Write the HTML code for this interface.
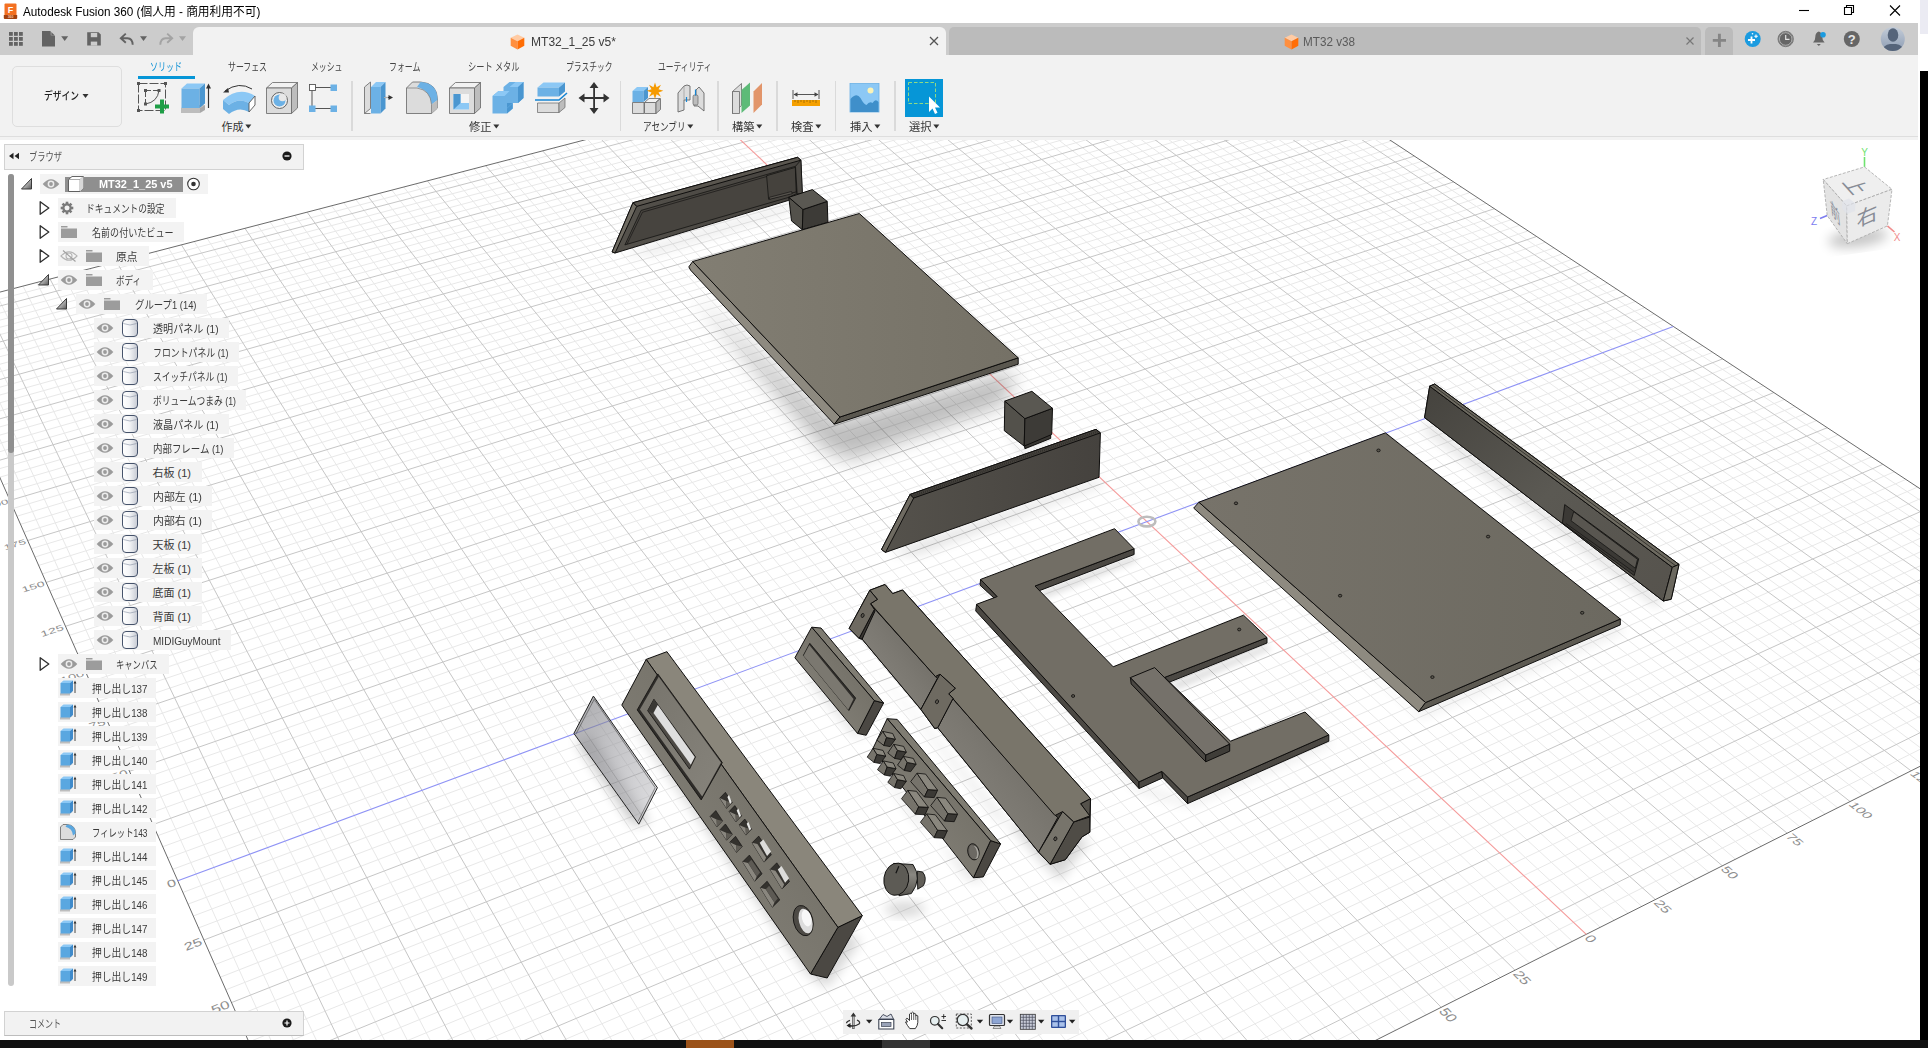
<!DOCTYPE html><html lang="ja"><head><meta charset="utf-8"><title>Autodesk Fusion 360</title><style>
html,body{margin:0;padding:0;background:#fff;overflow:hidden}
body{width:1928px;height:1048px;position:relative;font-family:"Liberation Sans","Noto Sans CJK JP",sans-serif}
.abs{position:absolute}
.t{position:absolute;white-space:pre;line-height:16px;height:16px;transform-origin:0 50%}
.b{position:absolute}
#win{position:absolute;left:0;top:0;width:1920px;height:1040px;overflow:hidden;background:#fff}
#titlebar{position:absolute;left:0;top:0;width:1920px;height:23px;background:#fff}
#tabstrip{position:absolute;left:0;top:0;width:1920px;height:55px}
#tabstrip:before{content:"";position:absolute;left:0;top:23px;width:1918px;height:32px;background:#cccccc}
#tab1{position:absolute;left:193px;top:27px;width:752.500px;height:28px;background:#f2f2f2;border-radius:6px 6px 0 0}
#tab2{position:absolute;left:949px;top:27px;width:751.500px;height:27.500px;background:#bbbbbb;border-radius:5px 5px 0 0}
#tabplus{position:absolute;left:1705px;top:27px;width:28px;height:27.500px;background:#bbbbbb;border-radius:5px 5px 0 0}
#toolbar{position:absolute;left:0;top:0;width:1920px;height:137px}
#toolbar:before{content:"";position:absolute;left:0;top:55px;width:1918px;height:85px;background:#f2f2f2}
#toolbar:after{content:"";position:absolute;left:0;top:136px;width:1918px;height:1px;background:#dedede}
#wsbtn{position:absolute;left:12px;top:65.500px;width:107.500px;height:59px;border:1.500px solid #dedede;border-radius:5px;background:#f2f2f2}
#brhead{position:absolute;left:4px;top:144px;width:298px;height:23.500px;background:#f2f2f2;border:1px solid #d2d2d2}
#comments{position:absolute;left:4px;top:1011px;width:298px;height:23px;background:#f2f2f2;border:1px solid #d2d2d2;border-bottom:1.500px solid #bdbdbd}
#sbtrack{position:absolute;left:8px;top:174px;width:5.500px;height:812px;background:#c9c9c9;border-radius:3px}
#sbthumb{position:absolute;left:8px;top:174px;width:5.500px;height:279px;background:#909090;border-radius:3px}
#bottom{position:absolute;left:0;top:1040px;width:1928px;height:8px;background:#101010}
#rstrip{position:absolute;left:1920px;top:0;width:8px;height:1048px;background:#000}
</style></head><body><div id="win"><svg id="scene" class="abs" style="left:0;top:140px" width="1920" height="900" viewBox="0 140 1920 900"><defs><filter id="sh6" x="-30%" y="-30%" width="160%" height="160%"><feGaussianBlur stdDeviation="6"/></filter><filter id="sh3" x="-30%" y="-30%" width="160%" height="160%"><feGaussianBlur stdDeviation="3"/></filter><filter id="sh10" x="-30%" y="-30%" width="160%" height="160%"><feGaussianBlur stdDeviation="10"/></filter><linearGradient id="gTop" x1="0" y1="0" x2="1" y2="0"><stop offset="0" stop-color="#827e73"/><stop offset="1" stop-color="#757166"/></linearGradient><linearGradient id="gBot" x1="0" y1="0" x2="1" y2="0"><stop offset="0" stop-color="#77736a"/><stop offset="1" stop-color="#6c6960"/></linearGradient><linearGradient id="gPanel" x1="0" y1="0" x2="1" y2="0"><stop offset="0" stop-color="#55524c"/><stop offset="1" stop-color="#45423e"/></linearGradient><linearGradient id="gG" x1="0" y1="0" x2="1" y2="1"><stop offset="0" stop-color="#45433e"/><stop offset="0.5" stop-color="#5b5953"/><stop offset="1" stop-color="#56534d"/></linearGradient><linearGradient id="gChan" x1="0" y1="1" x2="1" y2="0"><stop offset="0" stop-color="#8c8982"/><stop offset="0.5" stop-color="#7b7871"/><stop offset="1" stop-color="#66635c"/></linearGradient><linearGradient id="gFront" x1="0" y1="1" x2="1" y2="0"><stop offset="0" stop-color="#8a877f"/><stop offset="0.6" stop-color="#77746b"/><stop offset="1" stop-color="#6e6b62"/></linearGradient><linearGradient id="gGlass" x1="0" y1="0" x2="1" y2="1"><stop offset="0" stop-color="#77777c" stop-opacity="0.62"/><stop offset="0.6" stop-color="#9a9aa0" stop-opacity="0.5"/><stop offset="1" stop-color="#b8b8bc" stop-opacity="0.45"/></linearGradient><linearGradient id="gKnob" x1="0" y1="0" x2="0" y2="1"><stop offset="0" stop-color="#6a6862"/><stop offset="0.35" stop-color="#8a8882"/><stop offset="1" stop-color="#55534e"/></linearGradient><linearGradient id="gBez" x1="0" y1="0" x2="1" y2="1"><stop offset="0" stop-color="#77746c"/><stop offset="1" stop-color="#86837b"/></linearGradient></defs><path d="M-70.7 317.5L1167.7 -6.2M-65.1 330.2L1179.9 1.9M-62.3 336.6L1186.1 5.9M-59.4 343.1L1192.3 10.0M-56.5 349.7L1198.6 14.1M-50.7 362.9L1211.2 22.5M-47.7 369.6L1217.6 26.7M-44.7 376.4L1224.0 30.9M-41.7 383.2L1230.4 35.1M-35.6 397.0L1243.5 43.7M-32.5 404.0L1250.1 48.0M-29.4 411.0L1256.7 52.4M-26.3 418.2L1263.4 56.8M-19.9 432.5L1276.8 65.6M-16.7 439.8L1283.7 70.1M-13.5 447.2L1290.5 74.6M-10.2 454.6L1297.4 79.2M-3.6 469.6L1311.3 88.3M-0.2 477.2L1318.4 93.0M3.1 484.9L1325.5 97.6M6.6 492.6L1332.6 102.3M13.5 508.3L1347.0 111.8M17.0 516.2L1354.3 116.6M20.5 524.3L1361.6 121.4M24.1 532.3L1369.0 126.3M31.3 548.7L1383.9 136.1M35.0 557.0L1391.4 141.0M38.7 565.4L1399.0 146.0M42.4 573.9L1406.7 151.0M50.0 591.0L1422.1 161.2M53.8 599.7L1429.9 166.3M57.7 608.5L1437.8 171.5M61.6 617.4L1445.7 176.7M69.5 635.3L1461.7 187.2M73.5 644.4L1469.8 192.6M77.6 653.6L1477.9 197.9M81.7 662.9L1486.1 203.3M90.0 681.8L1502.7 214.2M94.2 691.3L1511.1 219.7M98.5 701.0L1519.5 225.3M102.8 710.7L1528.1 230.9M111.5 730.5L1545.3 242.2M115.9 740.6L1554.0 247.9M120.4 750.7L1562.7 253.7M124.9 760.9L1571.6 259.5M134.1 781.7L1589.4 271.3M138.8 792.3L1598.5 277.2M143.5 803.0L1607.6 283.2M148.2 813.7L1616.8 289.2M157.9 835.6L1635.3 301.5M162.8 846.7L1644.7 307.6M167.7 858.0L1654.2 313.9M172.7 869.3L1663.7 320.1M182.9 892.4L1683.0 332.8M188.1 904.1L1692.8 339.3M193.3 916.0L1702.7 345.7M198.6 927.9L1712.6 352.3M209.3 952.3L1732.7 365.5M214.8 964.7L1742.8 372.2M220.3 977.2L1753.1 378.9M225.9 989.8L1763.4 385.7M237.3 1015.6L1784.3 399.5M243.0 1028.7L1794.9 406.4M248.9 1041.9L1805.6 413.5M254.8 1055.3L1816.4 420.6M266.8 1082.5L1838.2 434.9M272.9 1096.4L1849.2 442.2M279.1 1110.4L1860.4 449.5M285.4 1124.6L1871.6 456.9M298.1 1153.5L1894.3 471.8M304.6 1168.2L1905.9 479.4M311.2 1183.1L1917.5 487.1M317.8 1198.2L1929.2 494.8M331.3 1228.9L1953.0 510.4M338.2 1244.5L1965.0 518.3M345.2 1260.3L1977.1 526.3M352.3 1276.3L1989.4 534.4M366.7 1309.0L2014.2 550.7M374.0 1325.7L2026.8 559.0M381.5 1342.5L2039.5 567.3M389.0 1359.6L2052.3 575.7M404.4 1394.5L2078.3 592.8M412.2 1412.2L2091.4 601.5M420.2 1430.2L2104.7 610.2M428.2 1448.5L2118.1 619.0M444.7 1485.7L2145.3 636.9M-59.5 307.5L475.3 1493.5M-45.6 303.9L497.3 1482.4M-31.7 300.3L519.2 1471.4M-4.2 293.1L562.5 1449.6M9.4 289.6L583.8 1438.9M23.0 286.1L605.0 1428.2M36.6 282.5L626.1 1417.6M63.4 275.5L667.6 1396.7M76.8 272.1L688.1 1386.4M90.1 268.6L708.5 1376.1M103.3 265.2L728.7 1365.9M129.6 258.3L768.7 1345.8M142.6 254.9L788.5 1335.9M155.6 251.6L808.1 1326.0M168.6 248.2L827.5 1316.2M194.2 241.5L866.0 1296.9M207.0 238.2L885.0 1287.3M219.7 234.9L903.9 1277.8M232.4 231.6L922.6 1268.4M257.5 225.1L959.7 1249.7M270.0 221.8L978.0 1240.5M282.4 218.6L996.2 1231.3M294.8 215.4L1014.2 1222.3M319.3 209.0L1049.9 1204.3M331.6 205.8L1067.6 1195.4M343.7 202.6L1085.1 1186.6M355.8 199.5L1102.6 1177.8M379.9 193.2L1137.0 1160.5M391.8 190.1L1154.0 1151.9M403.7 187.0L1171.0 1143.4M415.6 183.9L1187.8 1134.9M439.1 177.8L1221.0 1118.2M450.8 174.8L1237.4 1109.9M462.4 171.7L1253.8 1101.7M474.0 168.7L1270.0 1093.5M497.1 162.7L1302.1 1077.4M508.5 159.7L1318.0 1069.4M519.9 156.8L1333.8 1061.4M531.3 153.8L1349.4 1053.5M553.8 148.0L1380.4 1037.9M565.1 145.0L1395.8 1030.2M576.2 142.1L1411.0 1022.5M587.3 139.2L1426.2 1014.9M609.4 133.5L1456.2 999.8M620.4 130.6L1471.0 992.3M631.3 127.8L1485.8 984.9M642.2 125.0L1500.4 977.5M663.9 119.3L1529.4 962.9M674.6 116.5L1543.8 955.7M685.4 113.7L1558.1 948.5M696.0 111.0L1572.3 941.4M717.2 105.4L1600.3 927.3M727.8 102.7L1614.2 920.3M738.3 100.0L1628.1 913.3M748.7 97.3L1641.8 906.4M769.5 91.8L1669.0 892.7M779.8 89.2L1682.4 885.9M790.1 86.5L1695.8 879.2M800.4 83.8L1709.1 872.5M820.7 78.5L1735.5 859.2M830.9 75.9L1748.5 852.7M841.0 73.3L1761.5 846.1M851.0 70.6L1774.4 839.7M871.0 65.4L1799.9 826.8M880.9 62.9L1812.6 820.4M890.8 60.3L1825.2 814.1M900.6 57.7L1837.7 807.8M920.2 52.6L1862.4 795.3M930.0 50.1L1874.7 789.2M939.7 47.6L1886.9 783.0M949.3 45.1L1899.0 776.9M968.5 40.1L1923.1 764.8M978.1 37.6L1935.0 758.8M987.6 35.1L1946.8 752.9M997.1 32.6L1958.6 746.9M1015.9 27.7L1981.9 735.2M1025.3 25.3L1993.5 729.4M1034.6 22.9L2005.0 723.6M1043.9 20.5L2016.4 717.8M1062.4 15.7L2039.0 706.4M1071.6 13.3L2050.3 700.8M1080.7 10.9L2061.4 695.2M1089.8 8.5L2072.5 689.6M1108.0 3.8L2094.6 678.5M1117.0 1.4L2105.5 673.0M1126.0 -0.9L2116.3 667.6M1134.9 -3.2L2127.1 662.1M1152.7 -7.9L2148.5 651.4" stroke="#e8e8e8" stroke-width="1" fill="none"/><path d="M-67.9 323.8L1173.8 -2.2M-53.6 356.3L1204.8 18.3M-38.7 390.1L1236.9 39.4M-23.1 425.3L1270.1 61.2M-6.9 462.1L1304.3 83.7M10.0 500.4L1339.8 107.0M27.7 540.5L1376.4 131.1M46.2 582.4L1414.3 156.1M65.5 626.3L1453.6 181.9M85.8 672.3L1494.4 208.7M107.1 720.6L1536.6 236.5M129.5 771.3L1580.5 265.4M153.0 824.6L1626.0 295.3M203.9 940.0L1722.6 358.9M231.5 1002.6L1773.8 392.6M260.7 1068.8L1827.2 427.7M291.7 1139.0L1882.9 464.3M324.5 1213.4L1941.0 502.6M359.5 1292.6L2001.7 542.5M396.7 1376.9L2065.2 584.2M436.4 1467.0L2131.7 628.0M-18.0 296.7L540.9 1460.5M50.0 279.0L646.9 1407.1M116.5 261.7L748.8 1355.9M181.4 244.8L846.8 1306.5M244.9 228.3L941.2 1259.0M307.1 212.2L1032.2 1213.2M367.9 196.3L1119.8 1169.1M427.4 180.9L1204.4 1126.5M485.6 165.7L1286.1 1085.4M542.6 150.9L1365.0 1045.7M598.4 136.4L1441.2 1007.3M653.1 122.1L1515.0 970.2M759.1 94.5L1655.4 899.5M810.6 81.2L1722.3 865.8M861.0 68.0L1787.2 833.2M910.5 55.2L1850.1 801.6M958.9 42.6L1911.1 770.9M1006.5 30.2L1970.3 741.1M1053.2 18.1L2027.8 712.1M1098.9 6.1L2083.6 684.0M1143.9 -5.5L2137.8 656.7" stroke="#c6c6c6" stroke-width="1" fill="none"/><path d="M-73.5 311.2 L453.0 1504.7 L2159.1 646.0 L1161.6 -10.2Z" stroke="#6b6b6b" stroke-width="1" fill="none"/><path d="M706.7 108.2L1586.3 934.3" stroke="#f59a9a" stroke-width="1.100"/><path d="M177.8 880.8L1673.3 326.5" stroke="#8f93f5" stroke-width="1.100"/><ellipse cx="1146.9" cy="521.6" rx="8.500" ry="4.800" fill="none" stroke="#bdbdbd" stroke-width="2.600"/><text transform="matrix(1.0168 1.1063 -1.2869 0.6477 1365.0 1045.7)" x="1.5" y="3.6" font-size="10" fill="#8e8e8e" text-anchor="start" font-family="Liberation Sans,sans-serif">75</text><text transform="matrix(1.0353 1.0699 -1.2442 0.6262 1441.2 1007.3)" x="1.5" y="3.6" font-size="10" fill="#8e8e8e" text-anchor="start" font-family="Liberation Sans,sans-serif">50</text><text transform="matrix(1.0521 1.0353 -1.2036 0.6058 1515.0 970.2)" x="1.5" y="3.6" font-size="10" fill="#8e8e8e" text-anchor="start" font-family="Liberation Sans,sans-serif">25</text><text transform="matrix(1.0673 1.0023 -1.1650 0.5864 1586.3 934.3)" x="1.5" y="3.6" font-size="10" fill="#8e8e8e" text-anchor="start" font-family="Liberation Sans,sans-serif">0</text><text transform="matrix(1.0810 0.9709 -1.1282 0.5678 1655.4 899.5)" x="1.5" y="3.6" font-size="10" fill="#8e8e8e" text-anchor="start" font-family="Liberation Sans,sans-serif">25</text><text transform="matrix(1.0933 0.9409 -1.0931 0.5502 1722.3 865.8)" x="1.5" y="3.6" font-size="10" fill="#8e8e8e" text-anchor="start" font-family="Liberation Sans,sans-serif">50</text><text transform="matrix(1.1043 0.9123 -1.0596 0.5333 1787.2 833.2)" x="1.5" y="3.6" font-size="10" fill="#8e8e8e" text-anchor="start" font-family="Liberation Sans,sans-serif">75</text><text transform="matrix(1.1142 0.8851 -1.0277 0.5172 1850.1 801.6)" x="1.5" y="3.6" font-size="10" fill="#8e8e8e" text-anchor="start" font-family="Liberation Sans,sans-serif">100</text><text transform="matrix(1.1230 0.8590 -0.9971 0.5019 1911.1 770.9)" x="1.5" y="3.6" font-size="10" fill="#8e8e8e" text-anchor="start" font-family="Liberation Sans,sans-serif">125</text><text transform="matrix(1.1308 0.8340 -0.9679 0.4872 1970.3 741.1)" x="1.5" y="3.6" font-size="10" fill="#8e8e8e" text-anchor="start" font-family="Liberation Sans,sans-serif">150</text><text transform="matrix(1.1376 0.8102 -0.9400 0.4731 2027.8 712.1)" x="1.5" y="3.6" font-size="10" fill="#8e8e8e" text-anchor="start" font-family="Liberation Sans,sans-serif">175</text><text transform="matrix(1.1436 0.7873 -0.9133 0.4597 2083.6 684.0)" x="1.5" y="3.6" font-size="10" fill="#8e8e8e" text-anchor="start" font-family="Liberation Sans,sans-serif">200</text><text transform="matrix(1.1489 0.7655 -0.8877 0.4468 2137.8 656.7)" x="1.5" y="3.6" font-size="10" fill="#8e8e8e" text-anchor="start" font-family="Liberation Sans,sans-serif">225</text><text transform="matrix(1.1708 -0.3074 0.2332 0.5286 -67.9 323.8)" x="-1.5" y="3.6" font-size="10" fill="#8e8e8e" text-anchor="end" font-family="Liberation Sans,sans-serif">325</text><text transform="matrix(1.1916 -0.3200 0.2427 0.5502 -53.6 356.3)" x="-1.5" y="3.6" font-size="10" fill="#8e8e8e" text-anchor="end" font-family="Liberation Sans,sans-serif">300</text><text transform="matrix(1.2131 -0.3335 0.2528 0.5731 -38.7 390.1)" x="-1.5" y="3.6" font-size="10" fill="#8e8e8e" text-anchor="end" font-family="Liberation Sans,sans-serif">275</text><text transform="matrix(1.2353 -0.3478 0.2635 0.5974 -23.1 425.3)" x="-1.5" y="3.6" font-size="10" fill="#8e8e8e" text-anchor="end" font-family="Liberation Sans,sans-serif">250</text><text transform="matrix(1.2584 -0.3631 0.2750 0.6234 -6.9 462.1)" x="-1.5" y="3.6" font-size="10" fill="#8e8e8e" text-anchor="end" font-family="Liberation Sans,sans-serif">225</text><text transform="matrix(1.2824 -0.3794 0.2872 0.6510 10.0 500.4)" x="-1.5" y="3.6" font-size="10" fill="#8e8e8e" text-anchor="end" font-family="Liberation Sans,sans-serif">200</text><text transform="matrix(1.3072 -0.3968 0.3002 0.6806 27.7 540.5)" x="-1.5" y="3.6" font-size="10" fill="#8e8e8e" text-anchor="end" font-family="Liberation Sans,sans-serif">175</text><text transform="matrix(1.3330 -0.4154 0.3142 0.7122 46.2 582.4)" x="-1.5" y="3.6" font-size="10" fill="#8e8e8e" text-anchor="end" font-family="Liberation Sans,sans-serif">150</text><text transform="matrix(1.3598 -0.4353 0.3291 0.7460 65.5 626.3)" x="-1.5" y="3.6" font-size="10" fill="#8e8e8e" text-anchor="end" font-family="Liberation Sans,sans-serif">125</text><text transform="matrix(1.3877 -0.4567 0.3451 0.7824 85.8 672.3)" x="-1.5" y="3.6" font-size="10" fill="#8e8e8e" text-anchor="end" font-family="Liberation Sans,sans-serif">100</text><text transform="matrix(1.4167 -0.4797 0.3624 0.8214 107.1 720.6)" x="-1.5" y="3.6" font-size="10" fill="#8e8e8e" text-anchor="end" font-family="Liberation Sans,sans-serif">75</text><text transform="matrix(1.4469 -0.5045 0.3809 0.8635 129.5 771.3)" x="-1.5" y="3.6" font-size="10" fill="#8e8e8e" text-anchor="end" font-family="Liberation Sans,sans-serif">50</text><text transform="matrix(1.4784 -0.5312 0.4009 0.9088 153.0 824.6)" x="-1.5" y="3.6" font-size="10" fill="#8e8e8e" text-anchor="end" font-family="Liberation Sans,sans-serif">25</text><text transform="matrix(1.5112 -0.5601 0.4225 0.9578 177.8 880.8)" x="-1.5" y="3.6" font-size="10" fill="#8e8e8e" text-anchor="end" font-family="Liberation Sans,sans-serif">0</text><text transform="matrix(1.5454 -0.5914 0.4460 1.0110 203.9 940.0)" x="-1.5" y="3.6" font-size="10" fill="#8e8e8e" text-anchor="end" font-family="Liberation Sans,sans-serif">25</text><text transform="matrix(1.5812 -0.6254 0.4714 1.0686 231.5 1002.6)" x="-1.5" y="3.6" font-size="10" fill="#8e8e8e" text-anchor="end" font-family="Liberation Sans,sans-serif">50</text><text transform="matrix(1.6186 -0.6624 0.4991 1.1313 260.7 1068.8)" x="-1.5" y="3.6" font-size="10" fill="#8e8e8e" text-anchor="end" font-family="Liberation Sans,sans-serif">75</text><text transform="matrix(1.6577 -0.7028 0.5293 1.1998 291.7 1139.0)" x="-1.5" y="3.6" font-size="10" fill="#8e8e8e" text-anchor="end" font-family="Liberation Sans,sans-serif">100</text><text transform="matrix(1.6986 -0.7470 0.5623 1.2746 324.5 1213.4)" x="-1.5" y="3.6" font-size="10" fill="#8e8e8e" text-anchor="end" font-family="Liberation Sans,sans-serif">125</text><text transform="matrix(1.7414 -0.7954 0.5985 1.3566 359.5 1292.6)" x="-1.5" y="3.6" font-size="10" fill="#8e8e8e" text-anchor="end" font-family="Liberation Sans,sans-serif">150</text><text transform="matrix(1.7863 -0.8486 0.6383 1.4468 396.7 1376.9)" x="-1.5" y="3.6" font-size="10" fill="#8e8e8e" text-anchor="end" font-family="Liberation Sans,sans-serif">175</text><text transform="matrix(1.8334 -0.9074 0.6822 1.5464 436.4 1467.0)" x="-1.5" y="3.6" font-size="10" fill="#8e8e8e" text-anchor="end" font-family="Liberation Sans,sans-serif">200</text><polygon points="620.2,256.0 788.8,204.7 791.5,210.1 653.9,253.3" fill="#000" opacity="0.1" filter="url(#sh6)"/><polygon points="612.1,251.9 633.0,202.7 797.6,157.3 800.9,160.2 802.3,193.3 788.8,200.3 615.1,253.0" fill="url(#gPanel)" stroke="#0f0e0d" stroke-width="1.0" stroke-linejoin="round"/><polygon points="633.0,202.7 797.6,157.3 800.9,160.2 636.7,206.4" fill="#5a564f" stroke="#0f0e0d" stroke-width="1.0" stroke-linejoin="round"/><polygon points="612.1,251.9 633.0,202.7 636.7,206.4 615.1,253.0" fill="#6f6b62" stroke="#0f0e0d" stroke-width="1.0" stroke-linejoin="round"/><polygon points="624.9,244.9 641.1,210.4 795.5,166.3 796.4,193.7 788.8,197.3" fill="#47443f" stroke="#0f0e0d" stroke-width="0.7" stroke-linejoin="round"/><polyline points="627.0,244.1 642.5,212.2 794.2,168.6" fill="none" stroke="#0f0e0d" stroke-width="0.6"/><polygon points="766.6,175.7 795.3,167.4 796.2,191.9 768.6,199.3" fill="#45423d" stroke="#0f0e0d" stroke-width="0.7" stroke-linejoin="round"/><polygon points="769.3,197.3 791.5,191.5 792.2,193.7 769.7,199.3" fill="#55524c" stroke="#0f0e0d" stroke-width="0.6" stroke-linejoin="round"/><polygon points="795.5,166.3 800.9,160.2 802.3,193.3 797.2,193.9" fill="#4d4a45" stroke="#0f0e0d" stroke-width="0.7" stroke-linejoin="round"/><polygon points="788.8,197.3 803.0,209.5 802.3,229.7 791.5,220.9" fill="#53514b" stroke="#0f0e0d" stroke-width="1.0" stroke-linejoin="round"/><polygon points="803.0,209.5 827.2,201.4 827.9,222.3 802.3,229.7" fill="#3d3b37" stroke="#0f0e0d" stroke-width="1.0" stroke-linejoin="round"/><polygon points="788.8,197.3 812.4,189.6 827.2,201.4 803.0,209.5" fill="#5a5852" stroke="#0f0e0d" stroke-width="1.0" stroke-linejoin="round"/><polygon points="693.2,295.5 822.0,447.4 850.3,460.3 1004.8,403.6 1016.4,370.1 834.8,421.7" fill="#000" opacity="0.26" filter="url(#sh10)"/><polygon points="688.8,266.9 692.7,261.5 840.0,417.0 834.3,424.2 690.6,270.2" fill="#8e8a80" stroke="#0f0e0d" stroke-width="1.0" stroke-linejoin="round"/><polygon points="834.3,424.2 840.0,417.0 1018.2,357.8 1018.2,364.2" fill="#5a574f" stroke="#0f0e0d" stroke-width="1.0" stroke-linejoin="round"/><polygon points="692.7,261.5 859.3,213.5 1018.2,357.8 840.0,417.0" fill="url(#gTop)" stroke="#0f0e0d" stroke-width="1.0" stroke-linejoin="round"/><polygon points="1002.3,434.5 1024.2,452.6 1051.2,442.3 1040.9,450.0 1022.9,455.1" fill="#000" opacity="0.15" filter="url(#sh3)"/><polygon points="1024.2,442.8 1050.7,433.2 1050.7,438.4 1024.9,448.7" fill="#3a3834" stroke="#0f0e0d" stroke-width="1.0" stroke-linejoin="round"/><polygon points="1004.8,401.1 1024.9,418.6 1024.2,446.1 1004.3,430.7" fill="#53514b" stroke="#0f0e0d" stroke-width="1.0" stroke-linejoin="round"/><polygon points="1024.9,418.6 1052.5,408.3 1051.7,434.5 1024.2,446.1" fill="#3d3b37" stroke="#0f0e0d" stroke-width="1.0" stroke-linejoin="round"/><polygon points="1004.8,401.1 1031.9,391.3 1052.5,408.3 1024.9,418.6" fill="#5a5852" stroke="#0f0e0d" stroke-width="1.0" stroke-linejoin="round"/><polygon points="888.6,553.1 1099.0,480.1 1103.3,484.4 917.2,554.5" fill="#000" opacity="0.12" filter="url(#sh6)"/><polygon points="881.5,549.5 910.1,494.4 1096.1,429.3 1100.4,432.9 1099.0,477.3 885.5,552.4" fill="url(#gPanel)" stroke="#0f0e0d" stroke-width="1.0" stroke-linejoin="round"/><polygon points="881.5,549.5 910.1,494.4 913.7,498.0 885.5,552.4" fill="#6f6b62" stroke="#0f0e0d" stroke-width="1.0" stroke-linejoin="round"/><polygon points="910.1,494.4 1096.1,429.3 1100.4,432.9 913.7,498.0" fill="#45423d" stroke="#0f0e0d" stroke-width="1.0" stroke-linejoin="round"/><path d="M911.8 496.3 L1098.3 431.2" stroke="#2a2825" stroke-width="2.2" stroke-dasharray="0.8 1.2" opacity="0.8"/><polygon points="1427.9,422.1 1663.3,601.4 1656.6,605.9 1423.5,428.8" fill="#000" opacity="0.14" filter="url(#sh6)"/><polygon points="1424.6,417.6 1429.7,386.2 1434.7,384.0 1679.0,564.4 1671.2,599.2 1663.3,601.0" fill="#4d4b45" stroke="#0f0e0d" stroke-width="1.0" stroke-linejoin="round"/><polygon points="1424.6,417.6 1429.7,386.2 1672.3,567.3 1663.3,601.0" fill="url(#gG)" stroke="#0f0e0d" stroke-width="1.0" stroke-linejoin="round"/><polygon points="1429.7,386.2 1434.7,384.0 1679.0,564.4 1672.3,567.3" fill="#6d6a60" stroke="#0f0e0d" stroke-width="1.0" stroke-linejoin="round"/><polyline points="1432.4,385.1 1675.7,565.8" fill="none" stroke="#0f0e0d" stroke-width="0.6"/><polygon points="1672.3,567.3 1679.0,564.4 1671.2,599.2 1663.3,601.0" fill="#6b685f" stroke="#0f0e0d" stroke-width="1.0" stroke-linejoin="round"/><polygon points="1564.7,504.6 1638.7,558.8 1634.2,575.6 1562.4,523.0" fill="#3b3935" stroke="#0f0e0d" stroke-width="0.8" stroke-linejoin="round"/><polygon points="1573.7,511.7 1637.5,559.3 1635.3,568.2 1571.0,520.7" fill="#595650" stroke="#0f0e0d" stroke-width="0.7" stroke-linejoin="round"/><polyline points="1565.8,523.4 1634.2,572.3" fill="none" stroke="#0f0e0d" stroke-width="0.6"/><polygon points="1200.6,514.3 1420.4,716.9 1623.1,631.0 1620.3,624.9 1418.7,711.7" fill="#000" opacity="0.1" filter="url(#sh6)"/><polygon points="1193.7,508.1 1198.9,502.2 1425.6,702.5 1418.7,711.7" fill="#8e8a80" stroke="#0f0e0d" stroke-width="1.0" stroke-linejoin="round"/><polygon points="1418.7,711.7 1425.6,702.5 1620.3,619.0 1620.3,624.9" fill="#5d5a52" stroke="#0f0e0d" stroke-width="1.0" stroke-linejoin="round"/><polygon points="1198.9,502.2 1385.4,432.9 1620.3,619.0 1425.6,702.5" fill="url(#gBot)" stroke="#0f0e0d" stroke-width="1.0" stroke-linejoin="round"/><ellipse cx="1236.0" cy="503.3" rx="1.7" ry="1.4" transform="rotate(0 1236.0 503.3)" fill="#5a574f" stroke="#0f0e0d" stroke-width="0.8"/><ellipse cx="1378.5" cy="450.4" rx="1.7" ry="1.4" transform="rotate(0 1378.5 450.4)" fill="#5a574f" stroke="#0f0e0d" stroke-width="0.8"/><ellipse cx="1488.1" cy="536.6" rx="1.7" ry="1.4" transform="rotate(0 1488.1 536.6)" fill="#5a574f" stroke="#0f0e0d" stroke-width="0.8"/><ellipse cx="1340.1" cy="595.7" rx="1.7" ry="1.4" transform="rotate(0 1340.1 595.7)" fill="#5a574f" stroke="#0f0e0d" stroke-width="0.8"/><ellipse cx="1582.2" cy="612.8" rx="1.7" ry="1.4" transform="rotate(0 1582.2 612.8)" fill="#5a574f" stroke="#0f0e0d" stroke-width="0.8"/><ellipse cx="1432.4" cy="677.1" rx="1.7" ry="1.4" transform="rotate(0 1432.4 677.1)" fill="#5a574f" stroke="#0f0e0d" stroke-width="0.8"/><polygon points="977.2,612.4 1137.5,789.9 1189.1,805.6 1329.4,744.1 1328.8,738.3 1187.6,801.3 1139.0,785.6" fill="#000" opacity="0.12" filter="url(#sh6)"/><polygon points="1037.3,592.3 1134.1,555.1 1137.5,560.8 1045.9,598.0" fill="#000" opacity="0.12" filter="url(#sh3)"/><polygon points="1169.0,683.9 1267.0,643.9 1270.7,649.6 1177.6,689.7" fill="#000" opacity="0.12" filter="url(#sh3)"/><polygon points="976.6,604.3 1139.0,781.9 1139.0,788.5 975.7,610.9" fill="#4b4843" stroke="#0f0e0d" stroke-width="1.0" stroke-linejoin="round"/><polygon points="1139.0,781.9 1161.9,771.3 1162.7,777.9 1139.0,788.5" fill="#4b4843" stroke="#0f0e0d" stroke-width="1.0" stroke-linejoin="round"/><polygon points="1161.9,771.3 1187.6,797.0 1187.6,803.6 1162.7,777.9" fill="#4b4843" stroke="#0f0e0d" stroke-width="1.0" stroke-linejoin="round"/><polygon points="1187.6,797.0 1328.8,734.9 1328.8,741.2 1187.6,803.6" fill="#4b4843" stroke="#0f0e0d" stroke-width="1.0" stroke-linejoin="round"/><polygon points="1035.0,586.0 1134.1,548.8 1134.1,554.5 1036.7,591.7" fill="#4b4843" stroke="#0f0e0d" stroke-width="1.0" stroke-linejoin="round"/><polygon points="1164.7,677.4 1267.0,637.6 1267.0,643.0 1168.5,682.5" fill="#4b4843" stroke="#0f0e0d" stroke-width="1.0" stroke-linejoin="round"/><polygon points="980.6,579.4 997.2,596.6 997.2,600.9 980.0,585.2" fill="#4b4843" stroke="#0f0e0d" stroke-width="1.0" stroke-linejoin="round"/><polygon points="980.6,579.4 1114.6,528.7 1134.1,548.8 1035.0,586.0 1113.2,666.8 1243.5,615.2 1267.0,637.6 1164.7,677.4 1230.6,741.2 1305.0,712.0 1328.8,734.9 1187.6,797.0 1161.9,771.3 1139.0,781.9 976.6,604.3 997.2,596.6" fill="#726e65" stroke="#0f0e0d" stroke-width="1.0" stroke-linejoin="round"/><polygon points="1130.4,677.6 1205.7,755.0 1205.7,761.8 1131.2,683.9" fill="#4b4843" stroke="#0f0e0d" stroke-width="1.0" stroke-linejoin="round"/><polygon points="1205.7,755.0 1229.7,744.1 1229.7,751.2 1205.7,761.8" fill="#3f3d38" stroke="#0f0e0d" stroke-width="1.0" stroke-linejoin="round"/><polygon points="1130.4,677.6 1154.7,667.6 1229.7,744.1 1205.7,755.0" fill="#75716a" stroke="#0f0e0d" stroke-width="1.0" stroke-linejoin="round"/><ellipse cx="1239.2" cy="629.5" rx="1.6" ry="1.4" transform="rotate(0 1239.2 629.5)" fill="#5a574f" stroke="#0f0e0d" stroke-width="0.8"/><ellipse cx="1073.1" cy="696.0" rx="1.6" ry="1.4" transform="rotate(0 1073.1 696.0)" fill="#5a574f" stroke="#0f0e0d" stroke-width="0.8"/><polygon points="855.0,645.0 1040.0,860.0 1060.0,880.0 1090.0,840.0 1000.0,820.0" fill="#000" opacity="0.16" filter="url(#sh6)"/><polygon points="849.2,628.4 869.8,590.3 885.0,584.5 892.7,593.6 902.6,590.0 1090.5,798.6 1089.8,832.2 1082.1,836.8 1065.3,859.7 1050.1,864.3 1038.6,852.1 937.7,727.7 934.7,728.4 920.9,709.4 862.1,639.1 859.1,638.4" fill="#3f3d38" stroke="#0f0e0d" stroke-width="1.0" stroke-linejoin="round"/><polygon points="1050.1,864.3 1073.7,822.0 1089.8,817.0 1089.8,832.2 1082.1,836.8 1065.3,859.7" fill="#4f4c46" stroke="#0f0e0d" stroke-width="1.0" stroke-linejoin="round"/><polygon points="1080.6,803.7 1090.5,798.6 1089.8,817.0" fill="#55524b" stroke="#0f0e0d" stroke-width="1.0" stroke-linejoin="round"/><polygon points="873.3,607.3 937.3,678.6 920.9,709.4 862.1,639.1" fill="url(#gChan)" stroke="#0f0e0d" stroke-width="1.0" stroke-linejoin="round"/><polygon points="951.3,697.0 1057.7,817.7 1038.6,852.1 937.7,727.7" fill="url(#gChan)" stroke="#0f0e0d" stroke-width="1.0" stroke-linejoin="round"/><polygon points="869.8,590.3 885.0,584.5 892.7,593.6 902.6,590.0 1090.5,798.6 1080.6,803.7 1089.8,815.9 1073.7,822.0 1062.6,811.6 1055.0,815.5 948.7,693.8 955.3,688.3 940.0,674.2 935.4,676.5 870.5,603.7 877.4,599.4" fill="#79756a" stroke="#0f0e0d" stroke-width="1.0" stroke-linejoin="round"/><polygon points="870.5,603.7 875.1,610.9 862.1,639.1 859.1,638.4 874.4,609.4" fill="#3a3733" stroke="#0f0e0d" stroke-width="1.0" stroke-linejoin="round"/><polygon points="849.2,628.4 869.8,590.3 877.4,599.4 870.5,603.7 874.4,609.4 859.1,638.4" fill="#6e6a61" stroke="#0f0e0d" stroke-width="1.0" stroke-linejoin="round"/><polygon points="948.7,693.8 953.0,698.4 937.7,727.7 934.7,728.4" fill="#3a3733" stroke="#0f0e0d" stroke-width="1.0" stroke-linejoin="round"/><polygon points="920.9,709.4 940.0,674.2 955.3,688.3 948.7,693.8 953.0,698.4 937.7,727.7 934.7,728.4" fill="#6e6a61" stroke="#0f0e0d" stroke-width="1.0" stroke-linejoin="round"/><polygon points="1038.6,852.1 1062.6,811.6 1073.7,822.0 1050.1,864.3" fill="#77746b" stroke="#0f0e0d" stroke-width="1.0" stroke-linejoin="round"/><ellipse cx="862.6" cy="615.5" rx="1.5" ry="2" transform="rotate(20 862.6 615.5)" fill="#5a574f" stroke="#0f0e0d" stroke-width="0.8"/><ellipse cx="937.0" cy="701.7" rx="1.5" ry="2" transform="rotate(20 937.0 701.7)" fill="#5a574f" stroke="#0f0e0d" stroke-width="0.8"/><ellipse cx="1055.4" cy="838.8" rx="1.5" ry="2" transform="rotate(20 1055.4 838.8)" fill="#5a574f" stroke="#0f0e0d" stroke-width="0.8"/><polygon points="796.2,662.1 854.4,734.0 864.4,737.8 822.2,684.4" fill="#000" opacity="0.18" filter="url(#sh6)"/><polygon points="857.5,733.4 874.3,700.6 883.6,703.0 866.2,735.3" fill="#4b4843" stroke="#0f0e0d" stroke-width="1.0" stroke-linejoin="round"/><polygon points="811.7,627.2 821.0,628.0 883.6,703.0 874.3,700.6" fill="#7f7c72" stroke="#0f0e0d" stroke-width="1.0" stroke-linejoin="round"/><polygon points="794.9,657.8 811.7,627.2 874.3,700.6 857.5,733.4" fill="url(#gFront)" stroke="#0f0e0d" stroke-width="1.0" stroke-linejoin="round"/><polygon points="803.4,655.3 809.8,643.3 855.7,698.1 848.9,710.5" fill="#2f2d2a" stroke="#0f0e0d" stroke-width="0.7" stroke-linejoin="round"/><polygon points="803.6,655.7 809.3,645.1 853.5,699.1 848.2,709.7" fill="#7b7870"/><polygon points="870.9,757.2 968.8,878.7 985.2,882.3 914.4,818.8" fill="#000" opacity="0.15" filter="url(#sh6)"/><polygon points="973.4,877.8 990.6,840.6 1000.6,843.9 983.3,876.9" fill="#4b4843" stroke="#0f0e0d" stroke-width="1.0" stroke-linejoin="round"/><polygon points="887.2,718.7 897.2,719.4 1000.6,843.9 990.6,840.6" fill="#7f7c72" stroke="#0f0e0d" stroke-width="1.0" stroke-linejoin="round"/><polygon points="887.2,718.7 990.6,840.6 973.4,877.8 872.7,749.0" fill="url(#gFront)" stroke="#0f0e0d" stroke-width="1.0" stroke-linejoin="round"/><ellipse cx="973.4" cy="851.8" rx="5.6" ry="8.2" transform="rotate(-12 973.4 851.8)" fill="#5f5c56" stroke="#0f0e0d" stroke-width="0.8"/><ellipse cx="975.0" cy="852.4" rx="3.6" ry="6.6" transform="rotate(-12 975.0 852.4)" fill="#a9a7a1" stroke="None" stroke-width="0.8"/><ellipse cx="973.1" cy="852.1" rx="3.8" ry="7" transform="rotate(-12 973.1 852.1)" fill="#6c6963" stroke="None" stroke-width="0.8"/><polygon points="876.9,740.1 882.8,731.4 886.6,737.5 883.8,745.5" fill="#76736b" stroke="#0f0e0d" stroke-width="0.8" stroke-linejoin="round"/><polygon points="883.8,745.5 886.6,737.5 895.4,739.2 890.1,746.6" fill="#3b3935" stroke="#0f0e0d" stroke-width="0.8" stroke-linejoin="round"/><polygon points="882.8,731.4 892.7,733.5 895.4,739.2 886.6,737.5" fill="#8a877e" stroke="#0f0e0d" stroke-width="0.8" stroke-linejoin="round"/><polygon points="887.8,753.0 893.7,744.3 897.5,750.4 894.6,758.4" fill="#76736b" stroke="#0f0e0d" stroke-width="0.8" stroke-linejoin="round"/><polygon points="894.6,758.4 897.5,750.4 906.3,752.1 900.9,759.6" fill="#3b3935" stroke="#0f0e0d" stroke-width="0.8" stroke-linejoin="round"/><polygon points="893.7,744.3 903.6,746.4 906.3,752.1 897.5,750.4" fill="#8a877e" stroke="#0f0e0d" stroke-width="0.8" stroke-linejoin="round"/><polygon points="897.5,765.1 903.5,756.4 907.2,762.4 904.4,770.5" fill="#76736b" stroke="#0f0e0d" stroke-width="0.8" stroke-linejoin="round"/><polygon points="904.4,770.5 907.2,762.4 916.1,764.2 910.7,771.6" fill="#3b3935" stroke="#0f0e0d" stroke-width="0.8" stroke-linejoin="round"/><polygon points="903.5,756.4 913.3,758.4 916.1,764.2 907.2,762.4" fill="#8a877e" stroke="#0f0e0d" stroke-width="0.8" stroke-linejoin="round"/><polygon points="867.2,757.1 873.1,748.3 876.9,754.4 874.0,762.4" fill="#76736b" stroke="#0f0e0d" stroke-width="0.8" stroke-linejoin="round"/><polygon points="874.0,762.4 876.9,754.4 885.7,756.1 880.3,763.6" fill="#3b3935" stroke="#0f0e0d" stroke-width="0.8" stroke-linejoin="round"/><polygon points="873.1,748.3 883.0,750.4 885.7,756.1 876.9,754.4" fill="#8a877e" stroke="#0f0e0d" stroke-width="0.8" stroke-linejoin="round"/><polygon points="877.5,769.7 883.4,760.9 887.2,767.0 884.3,775.0" fill="#76736b" stroke="#0f0e0d" stroke-width="0.8" stroke-linejoin="round"/><polygon points="884.3,775.0 887.2,767.0 896.0,768.7 890.6,776.2" fill="#3b3935" stroke="#0f0e0d" stroke-width="0.8" stroke-linejoin="round"/><polygon points="883.4,760.9 893.3,763.0 896.0,768.7 887.2,767.0" fill="#8a877e" stroke="#0f0e0d" stroke-width="0.8" stroke-linejoin="round"/><polygon points="887.8,782.3 893.7,773.5 897.5,779.6 894.6,787.6" fill="#76736b" stroke="#0f0e0d" stroke-width="0.8" stroke-linejoin="round"/><polygon points="894.6,787.6 897.5,779.6 906.3,781.3 900.9,788.8" fill="#3b3935" stroke="#0f0e0d" stroke-width="0.8" stroke-linejoin="round"/><polygon points="893.7,773.5 903.6,775.6 906.3,781.3 897.5,779.6" fill="#8a877e" stroke="#0f0e0d" stroke-width="0.8" stroke-linejoin="round"/><polygon points="910.7,781.6 917.0,773.2 927.9,789.6 924.4,797.0" fill="#76736b" stroke="#0f0e0d" stroke-width="0.8" stroke-linejoin="round"/><polygon points="924.4,797.0 927.9,789.6 937.6,790.2 934.2,797.6" fill="#3b3935" stroke="#0f0e0d" stroke-width="0.8" stroke-linejoin="round"/><polygon points="917.0,773.2 925.6,774.1 937.6,790.2 927.9,789.6" fill="#8a877e" stroke="#0f0e0d" stroke-width="0.8" stroke-linejoin="round"/><polygon points="930.7,805.6 937.0,797.3 947.9,813.6 944.5,821.1" fill="#76736b" stroke="#0f0e0d" stroke-width="0.8" stroke-linejoin="round"/><polygon points="944.5,821.1 947.9,813.6 957.6,814.2 954.2,821.7" fill="#3b3935" stroke="#0f0e0d" stroke-width="0.8" stroke-linejoin="round"/><polygon points="937.0,797.3 945.6,798.2 957.6,814.2 947.9,813.6" fill="#8a877e" stroke="#0f0e0d" stroke-width="0.8" stroke-linejoin="round"/><polygon points="901.5,798.7 907.8,790.4 918.7,806.8 915.3,814.2" fill="#76736b" stroke="#0f0e0d" stroke-width="0.8" stroke-linejoin="round"/><polygon points="915.3,814.2 918.7,806.8 928.4,807.3 925.0,814.8" fill="#3b3935" stroke="#0f0e0d" stroke-width="0.8" stroke-linejoin="round"/><polygon points="907.8,790.4 916.4,791.3 928.4,807.3 918.7,806.8" fill="#8a877e" stroke="#0f0e0d" stroke-width="0.8" stroke-linejoin="round"/><polygon points="920.4,822.2 926.7,813.9 937.6,830.2 934.2,837.7" fill="#76736b" stroke="#0f0e0d" stroke-width="0.8" stroke-linejoin="round"/><polygon points="934.2,837.7 937.6,830.2 947.3,830.8 943.9,838.3" fill="#3b3935" stroke="#0f0e0d" stroke-width="0.8" stroke-linejoin="round"/><polygon points="926.7,813.9 935.3,814.8 947.3,830.8 937.6,830.2" fill="#8a877e" stroke="#0f0e0d" stroke-width="0.8" stroke-linejoin="round"/><ellipse cx="905" cy="909" rx="20" ry="7" fill="#000" opacity="0.16" filter="url(#sh6)"/><path d="M 917.3 871.1 L 922.6 872.0 Q 927.5 877.8 923.5 885.6 L 917.7 889.2 Z" fill="#615e58" stroke="#0f0e0d" stroke-width="0.9" stroke-linejoin="round"/><path d="M 893.6 863.4 L 913.0 864.5 Q 922.6 878.7 911.3 893.6 L 899.0 895.7 Z" fill="url(#gKnob)" stroke="#0f0e0d" stroke-width="0.9" stroke-linejoin="round"/><ellipse cx="896.3" cy="879.2" rx="12.4" ry="16.2" transform="rotate(8 896.3 879.2)" fill="#5d5b55" stroke="#0f0e0d" stroke-width="0.9"/><path d="M895.9 873.2 L898.8 866.3" stroke="#111" stroke-width="1.2"/><polygon points="576.4,742.3 633.1,825.0 649.3,821.8 590.9,735.8" fill="#000" opacity="0.22" filter="url(#sh6)"/><polygon points="573.9,733.4 593.4,696.1 657.4,787.7 638.8,824.2" fill="url(#gGlass)" stroke="#222" stroke-width="1.0" stroke-linejoin="round"/><polyline points="576.0,733.9 594.2,699.3 655.2,787.7 638.3,820.9" fill="none" stroke="#444" stroke-width="0.6"/><polygon points="626.8,716.8 807.2,974.0 827.2,987.4 860.6,940.6 847.3,933.9" fill="#000" opacity="0.16" filter="url(#sh6)"/><polygon points="810.5,974.0 837.9,927.3 862.3,915.6 827.2,978.0" fill="#4b4843" stroke="#0f0e0d" stroke-width="1.0" stroke-linejoin="round"/><polygon points="646.2,659.4 666.9,651.7 862.3,915.6 837.9,927.3" fill="#8a867b" stroke="#0f0e0d" stroke-width="1.0" stroke-linejoin="round"/><polygon points="621.8,705.1 646.2,659.4 837.9,927.3 810.5,974.0" fill="url(#gFront)" stroke="#0f0e0d" stroke-width="1.0" stroke-linejoin="round"/><polygon points="637.2,709.9 657.8,673.9 722.3,762.6 701.2,799.9" fill="#2e2c29" stroke="#0f0e0d" stroke-width="0.8" stroke-linejoin="round"/><polygon points="639.9,709.5 658.7,676.8 721.0,762.6 702.2,796.6" fill="url(#gBez)"/><polygon points="647.7,710.7 653.9,699.3 695.5,756.9 689.5,769.1" fill="#4d4a45" stroke="#0f0e0d" stroke-width="0.8" stroke-linejoin="round"/><polygon points="647.7,710.7 653.9,699.3 657.8,704.7 652.9,713.4" fill="#3a3834"/><polygon points="657.8,705.0 694.7,756.9 690.8,764.7 653.5,713.1" fill="#dedede"/><polygon points="719.8,798.1 725.4,792.3 732.3,802.5 726.6,808.4" fill="#34322e" stroke="#0f0e0d" stroke-width="0.6" stroke-linejoin="round"/><polygon points="719.8,798.1 726.2,801.1 726.6,808.4" fill="#8a877f"/><polygon points="726.6,808.4 726.2,801.1 732.3,802.5" fill="#5f5c55"/><polygon points="727.4,797.1 729.0,795.0 731.7,802.1 730.1,803.9" fill="#e8e8e6"/><polygon points="729.1,811.5 734.8,805.6 741.6,815.9 735.9,821.8" fill="#34322e" stroke="#0f0e0d" stroke-width="0.6" stroke-linejoin="round"/><polygon points="729.1,811.5 735.6,814.4 735.9,821.8" fill="#8a877f"/><polygon points="735.9,821.8 735.6,814.4 741.6,815.9" fill="#5f5c55"/><polygon points="736.7,810.5 738.3,808.4 741.0,815.5 739.5,817.2" fill="#e8e8e6"/><polygon points="739.1,824.9 744.8,819.0 751.6,829.3 746.0,835.1" fill="#34322e" stroke="#0f0e0d" stroke-width="0.6" stroke-linejoin="round"/><polygon points="739.1,824.9 745.6,827.8 746.0,835.1" fill="#8a877f"/><polygon points="746.0,835.1 745.6,827.8 751.6,829.3" fill="#5f5c55"/><polygon points="746.7,823.8 748.3,821.8 751.1,828.8 749.5,830.6" fill="#e8e8e6"/><polygon points="710.1,816.5 715.8,810.6 722.6,820.9 716.9,826.8" fill="#34322e" stroke="#0f0e0d" stroke-width="0.6" stroke-linejoin="round"/><polygon points="710.1,816.5 716.6,819.4 716.9,826.8" fill="#8a877f"/><polygon points="716.9,826.8 716.6,819.4 722.6,820.9" fill="#5f5c55"/><polygon points="719.8,829.9 725.4,824.0 732.3,834.3 726.6,840.2" fill="#34322e" stroke="#0f0e0d" stroke-width="0.6" stroke-linejoin="round"/><polygon points="719.8,829.9 726.2,832.8 726.6,840.2" fill="#8a877f"/><polygon points="726.6,840.2 726.2,832.8 732.3,834.3" fill="#5f5c55"/><polygon points="729.8,842.2 735.5,836.3 742.3,846.6 736.6,852.5" fill="#34322e" stroke="#0f0e0d" stroke-width="0.6" stroke-linejoin="round"/><polygon points="729.8,842.2 736.3,845.2 736.6,852.5" fill="#8a877f"/><polygon points="736.6,852.5 736.3,845.2 742.3,846.6" fill="#5f5c55"/><polygon points="752.1,842.8 758.7,836.1 771.4,854.8 764.1,862.1" fill="#34322e" stroke="#0f0e0d" stroke-width="0.6" stroke-linejoin="round"/><polygon points="752.1,842.8 757.4,844.1 766.1,857.5 764.1,862.1" fill="#8a877f"/><polygon points="759.7,842.8 763.4,839.4 771.1,851.4 767.1,856.1" fill="#dcdcda"/><polygon points="770.1,869.5 776.8,862.8 789.5,881.5 782.1,888.9" fill="#34322e" stroke="#0f0e0d" stroke-width="0.6" stroke-linejoin="round"/><polygon points="770.1,869.5 775.4,870.8 784.1,884.2 782.1,888.9" fill="#8a877f"/><polygon points="777.8,869.5 781.5,866.1 789.1,878.2 785.1,882.8" fill="#dcdcda"/><polygon points="742.7,861.8 749.4,855.1 762.1,873.8 754.7,881.2" fill="#34322e" stroke="#0f0e0d" stroke-width="0.6" stroke-linejoin="round"/><polygon points="742.7,861.8 748.1,863.1 756.7,876.5 754.7,881.2" fill="#8a877f"/><polygon points="748.1,863.1 751.4,859.8 760.1,872.5 756.7,876.5" fill="#5d5a54"/><polygon points="760.4,887.8 767.1,881.2 779.8,899.9 772.4,907.2" fill="#34322e" stroke="#0f0e0d" stroke-width="0.6" stroke-linejoin="round"/><polygon points="760.4,887.8 765.8,889.2 774.4,902.5 772.4,907.2" fill="#8a877f"/><polygon points="765.8,889.2 769.1,885.8 777.8,898.5 774.4,902.5" fill="#5d5a54"/><ellipse cx="803.2" cy="920.6" rx="9.6" ry="15.4" transform="rotate(-14 803.2 920.6)" fill="#4d4a45" stroke="#0f0e0d" stroke-width="0.8"/><ellipse cx="805.6" cy="921.0" rx="6.6" ry="12.6" transform="rotate(-14 805.6 921.0)" fill="#dcdcdc" stroke="None" stroke-width="0.8"/><ellipse cx="806.6" cy="918.1" rx="4.6" ry="8.5" transform="rotate(-14 806.6 918.1)" fill="#f8f8f8" stroke="None" stroke-width="0.8"/><ellipse cx="1858" cy="238" rx="30" ry="9" fill="#000" opacity="0.22" filter="url(#sh6)" transform="rotate(-8 1858 238)"/><path d="M1864.5 166.9 V157" stroke="#6fe36f" stroke-width="1.6"/><path d="M1827.2 215.6 L1820 218.5" stroke="#7c7cf0" stroke-width="1.6"/><path d="M1887.4 225.9 L1894.5 232" stroke="#f08c8c" stroke-width="1.6"/><text x="1864.7" y="156" font-size="10" fill="#6fe36f" text-anchor="middle" font-family="Liberation Sans,sans-serif">Y</text><text x="1814" y="224.5" font-size="10" fill="#7c7cf0" text-anchor="middle" font-family="Liberation Sans,sans-serif">Z</text><text x="1897" y="240.5" font-size="10" fill="#f08c8c" text-anchor="middle" font-family="Liberation Sans,sans-serif">X</text><polygon points="1864.5,166.9 1892.0,189.3 1846.7,205.9 1823.2,179.5" fill="#efefef" stroke="#a6a6a6" stroke-width="0.8" stroke-dasharray="3 1.5"/><polygon points="1823.2,179.5 1846.7,205.9 1847.3,243.7 1827.2,215.6" fill="#e3e3e3" stroke="#a6a6a6" stroke-width="0.8" stroke-dasharray="3 1.5"/><polygon points="1846.7,205.9 1892.0,189.3 1887.4,225.9 1847.3,243.7" fill="#ebebeb" stroke="#a6a6a6" stroke-width="0.8" stroke-dasharray="3 1.5"/><polygon points="1842.5,201 1849,198.5 1855.5,203.5 1855,211 1846.8,214 1842,208.5" fill="#dfe2ea" opacity="0.7"/><text transform="matrix(0.2350 0.2640 -0.4130 0.1260 1823.2 179.5)" x="50" y="-31" font-size="52" fill="#878c96" text-anchor="middle" font-family="Liberation Sans,Noto Sans CJK JP,sans-serif">上</text><text transform="matrix(0.4010 -0.1780 0.0060 0.3780 1847.3 243.7)" x="50" y="-31" font-size="52" fill="#878c96" text-anchor="middle" font-family="Liberation Sans,Noto Sans CJK JP,sans-serif">右</text><text transform="matrix(0.2010 0.2810 0.0400 0.3610 1827.2 215.6)" x="50" y="-28" font-size="50" fill="#878c96" text-anchor="middle" font-family="Liberation Sans,Noto Sans CJK JP,sans-serif">前</text></svg><div class="b" style="left:842.5px;top:1010px;width:236.5px;height:24px;background:#f0f0f0;"></div><svg class="abs" style="left:840px;top:1008px" width="242" height="30" viewBox="840 1008 242 30"><path d="M853.4 1014.500 v14.500" stroke="#333" stroke-width="2.2"/><path d="M853.4 1014.500 v14" stroke="#fff" stroke-width="0.7"/><path d="M850.6 1016.500 l2.800 -4 l2.800 4z" fill="#333"/><path d="M857 1020 q4 2 2 4 q-4 3 -11 1.500" fill="none" stroke="#333" stroke-width="1.300"/><path d="M846.500 1025.500 l4 -2.600 v5z" fill="#222"/><path d="M850 1020.300 q-3.500 1 -3.500 3" fill="none" stroke="#333" stroke-width="1.200"/><path d="M866.0 1019.8 h6.4 l-3.2 3.6z" fill="#222"/><path d="M878.800 1019.500 h15 v9.500 h-15z" fill="#fff" stroke="#3a4150" stroke-width="1.100"/><rect x="881.500" y="1022.500" width="9.500" height="4" fill="#9aa3b8" stroke="#3a4150" stroke-width="0.700"/><path d="M879.500 1019 l3.500 -4.500 l4 2 l4 -2.500 l2.500 5z" fill="#d9dde6" stroke="#3a4150" stroke-width="0.900"/><path d="M907.500 1022 q-2.500 -3 -1 -3.600 q1.500 -0.400 3 2.200 v-6.500 q1 -1.600 2 0 v-1.200 q1.100 -1.600 2.200 0 v1.200 q1.100 -1.400 2.100 0 v1.800 q1.100 -1.200 2 0 v6.500 q-0.200 3.500 -2.500 6.200 h-5.500 q-2.500 -3 -4.300 -6.600z" fill="#fff" stroke="#222" stroke-width="0.900"/><path d="M911.500 1014.500 v5.500 M913.700 1013.600 v6.400 M915.800 1015.400 v4.600" stroke="#222" stroke-width="0.700"/><circle cx="934.800" cy="1020.800" r="4.300" fill="#e6eff0" stroke="#333" stroke-width="1.200"/><path d="M938 1024 l4.200 4.200" stroke="#333" stroke-width="2.200" stroke-linecap="round"/><path d="M941.500 1016.500 h4.500 M943.700 1014.200 v4.600 M941.500 1020.500 h4.500" stroke="#222" stroke-width="0.900"/><rect x="956.300" y="1014" width="15" height="14" fill="none" stroke="#333" stroke-width="0.800" stroke-dasharray="2 1.500"/><circle cx="962.800" cy="1020" r="5.600" fill="#e6eff0" stroke="#333" stroke-width="1.300"/><path d="M967 1024.300 l4.500 4.200" stroke="#333" stroke-width="2.400" stroke-linecap="round"/><path d="M976.8 1019.8 h6.4 l-3.2 3.6z" fill="#222"/><rect x="989.500" y="1014.500" width="15" height="11" rx="1" fill="#dfe4ee" stroke="#333" stroke-width="1.200"/><rect x="992" y="1017" width="10" height="6.500" fill="#8ea6d4" stroke="#3c4f7c" stroke-width="0.600"/><path d="M994.500 1026 h5 l1.500 2.500 h-8z" fill="#ddd" stroke="#555" stroke-width="0.600"/><path d="M1006.8 1019.8 h6.4 l-3.2 3.6z" fill="#222"/><rect x="1020.300" y="1014.300" width="15" height="15" fill="#c8ccd8" stroke="#333" stroke-width="0.800"/><path d="M1023.300 1014.300 v15 M1026.300 1014.300 v15 M1029.300 1014.300 v15 M1032.300 1014.300 v15 M1020.300 1017.300 h15 M1020.300 1020.300 h15 M1020.300 1023.300 h15 M1020.300 1026.300 h15" stroke="#4a4e5c" stroke-width="0.700"/><path d="M1038.0 1019.8 h6.4 l-3.2 3.6z" fill="#222"/><rect x="1051" y="1015" width="15" height="13" rx="1" fill="#2f4f9a"/><rect x="1052.300" y="1016.300" width="5.500" height="4.500" fill="#a9c1ea"/><rect x="1059.200" y="1016.300" width="5.500" height="4.500" fill="#a9c1ea"/><rect x="1052.300" y="1022.200" width="5.500" height="4.500" fill="#a9c1ea"/><rect x="1059.200" y="1022.200" width="5.500" height="4.500" fill="#a9c1ea"/><path d="M1069.0 1019.8 h6.4 l-3.2 3.6z" fill="#222"/></svg><div id="titlebar"><svg class="abs" style="left:3px;top:3px" width="15" height="17" viewBox="0 0 15 17"><path d="M1.5 1.5 Q1.5 0.5 2.5 0.5 L12.5 0.5 Q13.5 0.5 13.5 1.5 L13.5 12 L1.5 12Z" fill="#f37021"/><path d="M0.8 12 L14.2 12 L14.2 15 Q14.2 16 13.2 16 L1.8 16 Q0.8 16 0.8 15Z" fill="#a3410e"/><text x="7.5" y="9.5" font-size="9" font-weight="700" fill="#fff" text-anchor="middle" font-family="Liberation Sans,sans-serif">F</text><text x="7.5" y="15.2" font-size="3.4" font-weight="700" fill="#f8c9a6" text-anchor="middle" font-family="Liberation Sans,sans-serif">360</text></svg><span class="t" style="left:23.0px;top:3.5px;font-size:12px;color:#000;font-weight:400;transform:scaleX(0.9784);">Autodesk Fusion 360 (個人用 - 商用利用不可)</span><svg class="abs" style="left:1790px;top:0" width="130" height="23" viewBox="1790 0 130 23" fill="none" stroke="#000" stroke-width="1.1"><path d="M1799 10.5 L1809 10.5"/><path d="M1844.5 7.5 h7 v7 h-7z M1846.5 7.5 v-2 h7 v7 h-2"/><path d="M1890 5.5 l10 10 M1900 5.5 l-10 10"/></svg></div><div id="tabstrip"><svg class="abs" style="left:0;top:23px" width="195" height="32" viewBox="0 23 195 32"><rect x="9" y="32" width="3.800" height="3.800" fill="#636363"/><rect x="9" y="37" width="3.800" height="3.800" fill="#636363"/><rect x="9" y="42" width="3.800" height="3.800" fill="#636363"/><rect x="14" y="32" width="3.800" height="3.800" fill="#636363"/><rect x="14" y="37" width="3.800" height="3.800" fill="#636363"/><rect x="14" y="42" width="3.800" height="3.800" fill="#636363"/><rect x="19" y="32" width="3.800" height="3.800" fill="#636363"/><rect x="19" y="37" width="3.800" height="3.800" fill="#636363"/><rect x="19" y="42" width="3.800" height="3.800" fill="#636363"/><path d="M42 31 h8.300 l4.700 4.700 v10.800 h-13z" fill="#636363"/><path d="M50.800 30.600 v4.600 h4.600z" fill="#cccccc"/><path d="M51.300 32 v3 h3z" fill="#636363"/><path d="M61.200 36.200 h7 l-3.500 4.800z" fill="#636363"/><path d="M87.200 32.200 h11.300 l2.300 2.300 v11.100 h-13.600z" fill="#636363"/><rect x="90.800" y="33" width="6.400" height="4.200" fill="#cccccc"/><rect x="90.800" y="41.600" width="6.400" height="4" fill="#cccccc"/><path d="M125.800 33.600 l-5 4.600 l5 4.600 M121.300 38.200 h6.200 q5 0.300 5.200 6.600" fill="none" stroke="#636363" stroke-width="1.900" stroke-linejoin="miter"/><path d="M140 36.200 h7 l-3.500 4.800z" fill="#636363"/><path d="M167.200 33.600 l5 4.600 l-5 4.600 M171.700 38.200 h-6.200 q-5 0.300 -5.200 6.600" fill="none" stroke="#a3a3a3" stroke-width="1.900"/><path d="M179 36.200 h7 l-3.500 4.800z" fill="#a3a3a3"/></svg><div id="tab1"></div><svg class="abs" style="left:510px;top:33.5px" width="15" height="16" viewBox="0 0 15 16"><path d="M7.5 0.6 L14.3 3.8 L7.5 7.2 L0.7 3.8Z" fill="#ffcba4"/><path d="M0.7 3.8 L7.5 7.2 L7.5 15.4 L0.7 11.8Z" fill="#ff8f3f"/><path d="M14.3 3.8 L7.5 7.2 L7.5 15.4 L14.3 11.8Z" fill="#ff6d05"/></svg><span class="t" style="left:531.0px;top:33.5px;font-size:12px;color:#3c3c3c;font-weight:400;transform:scaleX(1.0031);">MT32_1_25 v5*</span><svg class="abs" style="left:928px;top:35px" width="12" height="12" viewBox="0 0 12 12"><path d="M2 2 L10 10 M10 2 L2 10" stroke="#555" stroke-width="1.3"/></svg><div id="tab2"></div><svg class="abs" style="left:1283.5px;top:33.5px" width="15" height="16" viewBox="0 0 15 16"><path d="M7.5 0.6 L14.3 3.8 L7.5 7.2 L0.7 3.8Z" fill="#ffcba4"/><path d="M0.7 3.8 L7.5 7.2 L7.5 15.4 L0.7 11.8Z" fill="#ff8f3f"/><path d="M14.3 3.8 L7.5 7.2 L7.5 15.4 L14.3 11.8Z" fill="#ff6d05"/></svg><span class="t" style="left:1303.0px;top:33.5px;font-size:12px;color:#5a5a5a;font-weight:400;transform:scaleX(0.9745);">MT32 v38</span><svg class="abs" style="left:1684px;top:35px" width="12" height="12" viewBox="0 0 12 12"><path d="M2.5 2.5 L9.5 9.500 M9.500 2.5 L2.5 9.500" stroke="#777" stroke-width="1.2"/></svg><div id="tabplus"></div><svg class="abs" style="left:1700px;top:23px" width="220" height="32" viewBox="1700 23 220 32"><path d="M1712.800 40.400 h13.200 M1719.400 33.800 v13.200" stroke="#858585" stroke-width="2.900"/><circle cx="1752.700" cy="39" r="8" fill="#1b9be0"/><path d="M1751.500 36.500 v7 M1748 40 h7" stroke="#fff" stroke-width="1.800"/><path d="M1756 34.500 v3.500 M1754.300 36.200 h3.500" stroke="#fff" stroke-width="1.100"/><circle cx="1752.500" cy="33.800" r="0.800" fill="#fff"/><circle cx="1785.700" cy="39" r="7.300" fill="#666" stroke="#666" stroke-width="0"/><circle cx="1785.700" cy="39" r="7.700" fill="none" stroke="#666" stroke-width="0.800"/><circle cx="1785.700" cy="39" r="6.300" fill="none" stroke="#d0d0d0" stroke-width="0.700"/><path d="M1785.700 35 v4.300 h3.800" fill="none" stroke="#e4e4e4" stroke-width="1.200"/><path d="M1813 42.500 q2.300 -1.500 2.300 -5.500 q0 -4.500 3.500 -5.500 q3.500 1 3.500 5.500 q0 4 2.300 5.500z" fill="#666"/><path d="M1816.800 44 h4 l-2 2z" fill="#666"/><circle cx="1823" cy="34.700" r="2.800" fill="#1b9be0"/><circle cx="1851.800" cy="39" r="8" fill="#666"/><text x="1851.800" y="43.800" font-size="13" font-weight="700" fill="#e8e8e8" text-anchor="middle" font-family="Liberation Sans,sans-serif">?</text><defs><linearGradient id="av" x1="0" y1="0" x2="0" y2="1"><stop offset="0" stop-color="#c3ccd8"/><stop offset="1" stop-color="#8e9db4"/></linearGradient><clipPath id="avc"><circle cx="1892.800" cy="39" r="12"/></clipPath></defs><circle cx="1892.800" cy="39" r="12" fill="url(#av)"/><g clip-path="url(#avc)"><ellipse cx="1893" cy="35" rx="5.300" ry="6.800" fill="#55647a"/><path d="M1881 54 q1 -9 9 -10 l6 0 q8 1 9 10z" fill="#55647a"/></g></svg></div><div id="toolbar"><div id="wsbtn"></div><span class="t" style="left:43.5px;top:87.5px;font-size:11px;color:#222;font-weight:500;transform:scaleX(0.7955);">デザイン</span><svg class="abs" style="left:82px;top:93px" width="8" height="6"><path d="M0.500 1 h6 l-3 4z" fill="#333"/></svg><span class="t" style="left:150.0px;top:58.5px;font-size:11px;color:#0a8fd4;font-weight:400;transform:scaleX(0.7273);">ソリッド</span><span class="t" style="left:228.0px;top:58.5px;font-size:11px;color:#444;font-weight:400;transform:scaleX(0.7177);">サーフェス</span><span class="t" style="left:311.0px;top:58.5px;font-size:11px;color:#444;font-weight:400;transform:scaleX(0.7159);">メッシュ</span><span class="t" style="left:389.0px;top:58.5px;font-size:11px;color:#444;font-weight:400;transform:scaleX(0.7213);">フォーム</span><span class="t" style="left:467.5px;top:58.5px;font-size:11px;color:#444;font-weight:400;transform:scaleX(0.7457);">シート メタル</span><span class="t" style="left:565.5px;top:58.5px;font-size:11px;color:#444;font-weight:400;transform:scaleX(0.7069);">プラスチック</span><span class="t" style="left:658.0px;top:58.5px;font-size:11px;color:#444;font-weight:400;transform:scaleX(0.7069);">ユーティリティ</span><div class="b" style="left:138px;top:75.5px;width:57px;height:3px;background:#0696d7;"></div><span class="t" style="left:221.5px;top:118.5px;font-size:11px;color:#333;font-weight:400;transform:scaleX(1.0000);">作成</span><svg class="abs" style="left:245.0px;top:124px" width="7" height="5"><path d="M0.300 0.500 h6 l-3 4z" fill="#333"/></svg><span class="t" style="left:468.5px;top:118.5px;font-size:11px;color:#333;font-weight:400;transform:scaleX(1.0227);">修正</span><svg class="abs" style="left:492.5px;top:124px" width="7" height="5"><path d="M0.300 0.500 h6 l-3 4z" fill="#333"/></svg><span class="t" style="left:642.5px;top:118.5px;font-size:11px;color:#333;font-weight:400;transform:scaleX(0.7805);">アセンブリ</span><svg class="abs" style="left:686.5px;top:124px" width="7" height="5"><path d="M0.300 0.500 h6 l-3 4z" fill="#333"/></svg><span class="t" style="left:732.0px;top:118.5px;font-size:11px;color:#333;font-weight:400;transform:scaleX(1.0227);">構築</span><svg class="abs" style="left:756.0px;top:124px" width="7" height="5"><path d="M0.300 0.500 h6 l-3 4z" fill="#333"/></svg><span class="t" style="left:790.5px;top:118.5px;font-size:11px;color:#333;font-weight:400;transform:scaleX(1.0227);">検査</span><svg class="abs" style="left:814.5px;top:124px" width="7" height="5"><path d="M0.300 0.500 h6 l-3 4z" fill="#333"/></svg><span class="t" style="left:849.5px;top:118.5px;font-size:11px;color:#333;font-weight:400;transform:scaleX(1.0227);">挿入</span><svg class="abs" style="left:873.5px;top:124px" width="7" height="5"><path d="M0.300 0.500 h6 l-3 4z" fill="#333"/></svg><span class="t" style="left:908.5px;top:118.5px;font-size:11px;color:#333;font-weight:400;transform:scaleX(1.0227);">選択</span><svg class="abs" style="left:932.5px;top:124px" width="7" height="5"><path d="M0.300 0.500 h6 l-3 4z" fill="#333"/></svg><div class="b" style="left:351px;top:81px;width:1.5px;height:50px;background:#dadada;"></div><div class="b" style="left:619.5px;top:81px;width:1.5px;height:50px;background:#dadada;"></div><div class="b" style="left:717px;top:81px;width:1.5px;height:50px;background:#dadada;"></div><div class="b" style="left:776px;top:81px;width:1.5px;height:50px;background:#dadada;"></div><div class="b" style="left:834.5px;top:81px;width:1.5px;height:50px;background:#dadada;"></div><div class="b" style="left:894px;top:81px;width:1.5px;height:50px;background:#dadada;"></div><svg class="abs" style="left:0;top:55px" width="1920" height="82" viewBox="0 55 1920 82"><g fill="none" stroke="#555" stroke-width="1"><path d="M138.500 83.500 h27 v27 h-27z" stroke-dasharray="9 2"/><path d="M145.500 104 v-13.500 h13.500" stroke-dasharray="5 2"/><path d="M145.500 104 q12 -2 13.500 -13.500"/></g><g fill="#555"><rect x="137" y="82" width="3" height="3"/><rect x="164" y="82" width="3" height="3"/><rect x="137" y="109" width="3" height="3"/><rect x="144" y="89" width="3" height="3"/><rect x="157.500" y="89" width="3" height="3"/><rect x="144" y="102.500" width="3" height="3"/></g><path d="M160 99.500 h4 v5 h5 v4 h-5 v5 h-4 v-5 h-5 v-4 h5z" fill="#1e9e46"/><path d="M181 108 l5 -3 h19 l-5 3z M181 108 v5 h19 v-5z" fill="#bdbdbd"/><path d="M200 108 l5 -3 v5 l-5 3z" fill="#a8a8a8"/><path d="M181.500 88.500 l5.500 -5 h18 l-5.500 5z" fill="#8cc8f5"/><path d="M181.500 88.500 h18 v19.500 h-18z" fill="#6cb1e5"/><path d="M199.500 88.500 l5.500 -5 v20 l-5.500 4.500z" fill="#4a96d0"/><path d="M208.500 108 v-21" stroke="#333" stroke-width="1.200"/><path d="M206 88.500 l2.500 -5 l2.500 5z" fill="#333"/><path d="M223 100 q16 -14 32 -4 l-6 7 q-10 -6 -20 2z" fill="#8cc8f5"/><path d="M223 100 l6 5 q10 -8 20 -2 v9 q-10 -6 -20 2 l-6 -5z" fill="#6cb1e5"/><path d="M249 103 l6 -7 v9 l-6 7z" fill="#fff" stroke="#555" stroke-width="0.900"/><path d="M225 91 q14 -10 27 -2" fill="none" stroke="#333" stroke-width="1"/><path d="M223 92.500 l5 -4.500 l1 4.500z" fill="#333"/><path d="M266.500 88 l6 -5.500 h25 l-6 5.500z" fill="#f2f2f2" stroke="#666" stroke-width="0.800"/><path d="M291.500 88 l6 -5.500 v25.500 l-6 5.500z" fill="#bdbdbd" stroke="#666" stroke-width="0.800"/><path d="M266.500 88 h25 v25.500 h-25z" fill="#dcdcdc" stroke="#666" stroke-width="0.800"/><circle cx="279.500" cy="100.500" r="8" fill="#eee" stroke="#555" stroke-width="0.900"/><circle cx="279.500" cy="100.500" r="6" fill="#6cb1e5"/><circle cx="282.500" cy="97.500" r="3.800" fill="#e8e8e8"/><path d="M312 87.500 h22 M312 108.500 h22 M312 87.500 v21" stroke="#555" stroke-width="1" fill="none"/><rect x="309.500" y="84.500" width="6" height="6" fill="#fff" stroke="#555" stroke-width="0.900"/><rect x="330.500" y="84.500" width="6.500" height="6.500" fill="#6cb1e5"/><rect x="309" y="105.500" width="6.500" height="6.500" fill="#6cb1e5"/><rect x="330.500" y="105.500" width="6.500" height="6.500" fill="#6cb1e5"/><path d="M364.500 87 l6 -5 v26.500 l-6 5z" fill="#dcdcdc" stroke="#666" stroke-width="0.800"/><path d="M364.500 113.500 h6" stroke="#666" stroke-width="0.800"/><path d="M371 87 l5 -5 h9.500 l-5 5z" fill="#8cc8f5"/><path d="M371 87 h9.500 v26.500 h-9.500z" fill="#6cb1e5"/><path d="M380.500 87 l5 -5 v26.500 l-5 5z" fill="#4a96d0"/><path d="M384 97.500 h6" stroke="#333" stroke-width="1.100"/><path d="M388.500 95 l4.500 2.500 l-4.500 2.500z" fill="#333"/><path d="M384 97.500 h4" stroke="#fff" stroke-width="0.600"/><path d="M406.500 88 l6 -6 h8 q17 1 17 18 v8 l-6 5.500 h-25z" fill="#dcdcdc" stroke="#666" stroke-width="0.800"/><path d="M420.500 82 q17 1 17 18 l-6 4.500 q-1 -14 -14.500 -17.500z" fill="#6cb1e5"/><path d="M431.500 104.500 l6 -4.500 v8 l-6 5.500z" fill="#bdbdbd"/><path d="M406.500 88 h10.500 q13.500 2 14.500 16.500 v9" fill="none" stroke="#777" stroke-width="0.700"/><path d="M449.500 88 l6 -5.500 h25 l-6 5.500z" fill="#f2f2f2" stroke="#666" stroke-width="0.800"/><path d="M474.500 88 l6 -5.500 v25.500 l-6 5.500z" fill="#bdbdbd" stroke="#666" stroke-width="0.800"/><path d="M449.500 88 h25 v25.500 h-25z" fill="#dcdcdc" stroke="#666" stroke-width="0.800"/><rect x="453.500" y="94" width="15.500" height="15.500" fill="#f4f4f4"/><path d="M453.500 94 h7 v9 h8.500 v6.500 h-15.500z" fill="#8cc8f5"/><path d="M453.500 94 h7 v9 l-7 6.500z" fill="#4a96d0"/><path d="M492.500 96 l6 -5 h5 v-4 l6 -5 h14 v16 l-5.500 5 h-5 v5.500 l-6 5 h-14.500z" fill="#6cb1e5"/><path d="M509.500 87 l6 -5 h8.500 l-5.500 5z M492.500 96 l6 -5 h11 l-5 5z" fill="#8cc8f5"/><path d="M518 87 l5.500 -5 v16 l-5.500 5z M507 103 h5.500 l-5.500 5z" fill="#4a96d0"/><path d="M507 108.500 l5.500 -5 v5 l-5.500 5z" fill="#4a96d0"/><path d="M537.500 87.500 l6 -5 h21.500 l-6 5z" fill="#8cc8f5"/><path d="M537.500 87.500 h21.500 v9 h-21.500z" fill="#6cb1e5"/><path d="M559 87.500 l6 -5 v9 l-6 5z" fill="#4a96d0"/><path d="M537.500 103 h21.500 v9.500 h-21.500z" fill="#dcdcdc" stroke="#666" stroke-width="0.700"/><path d="M559 103 l6 -5 v9.500 l-6 5z" fill="#bdbdbd" stroke="#666" stroke-width="0.700"/><path d="M535 100 h24 l8 -7" fill="none" stroke="#1685d3" stroke-width="1.600"/><g fill="#333" stroke="none"><path d="M593.200 86 h1.800 v24 h-1.800z M582 97.100 h24 v1.800 h-24z"/><path d="M594 82 l4.500 6 h-9z M594 114 l4.500 -6 h-9z M578.500 98 l6 -4.500 v9z M609.500 98 l-6 -4.500 v9z"/></g><path d="M632.500 91 l4.500 -4 h11 l-4.500 4z" fill="#8cc8f5"/><path d="M632.500 91 h11 v11 h-11z" fill="#6cb1e5"/><path d="M643.500 91 l4.500 -4 v11 l-4.500 4z" fill="#4a96d0"/><path d="M632.500 102.500 h11.500 v11 h-11.500z M644.500 102.500 h11.500 v11 h-11.500z" fill="#dcdcdc" stroke="#666" stroke-width="0.800"/><path d="M644.500 102.500 l4.500 -4 h11 l-4.500 4z" fill="#f2f2f2" stroke="#666" stroke-width="0.800"/><path d="M656 102.500 l4.500 -4 v11 l-4.500 4z" fill="#bdbdbd" stroke="#666" stroke-width="0.800"/><path d="M655 82.500 l1.600 4.800 l4.400 -2.500 l-2.500 4.400 l4.800 1.600 l-4.800 1.600 l2.500 4.400 l-4.400 -2.500 l-1.600 4.800 l-1.600 -4.800 l-4.400 2.500 l2.500 -4.400 l-4.800 -1.600 l4.800 -1.600 l-2.500 -4.400 l4.400 2.500z" fill="#f59a00"/><path d="M678 93 l6 -7 q3 -2 6 0 v14 l-6 0 v10 l-6 2z" fill="#dcdcdc" stroke="#666" stroke-width="0.900"/><path d="M684 86 v14" stroke="#999" stroke-width="0.700"/><path d="M696 90 l3 -3 l5 6 v18 l-6 -5 h-4 v-9 h2z" fill="#dcdcdc" stroke="#666" stroke-width="0.900"/><rect x="693" y="95" width="5" height="10" rx="1.500" fill="#bdbdbd" stroke="#666" stroke-width="0.700"/><path d="M686.500 97 v5 M695.500 89.500 v6" stroke="#1685d3" stroke-width="1.200"/><path d="M732.500 91.500 l9 -8 v22 l-9 8z" fill="#dcdcdc" stroke="#666" stroke-width="0.800"/><path d="M732.500 91.500 h7 v22 h-7z" fill="#dcdcdc" stroke="#666" stroke-width="0.800"/><path d="M741.500 90 l8.500 -7.500 v23 l-8.500 7.500z" fill="#5dbb78"/><path d="M753.500 91.500 l8.500 -8.500 v21.500 l-8.500 8.500z" fill="#e2956a"/><path d="M793 90 v9 M819 90 v9 M794 94.500 h24" stroke="#444" stroke-width="0.900" fill="none"/><path d="M793.500 94.500 l4 -2.200 v4.400z M818.500 94.500 l-4 -2.200 v4.400z" fill="#444"/><rect x="792" y="100" width="28" height="6" fill="#f5a000"/><path d="M795 100 v2 M798 100 v3 M801 100 v2 M804 100 v3 M807 100 v2 M810 100 v3 M813 100 v2 M816 100 v3" stroke="#7a5200" stroke-width="0.600"/><rect x="850" y="83.500" width="29" height="28.500" fill="#8cc8f5" stroke="#6cb1e5" stroke-width="0.800"/><circle cx="870.500" cy="90.500" r="3" fill="#fbf3b8"/><path d="M850.500 99 q6 -7 10 -1 q3 6 6 7 q3 -4 6 -2 q3 -5 6 -1 v10 h-28z" fill="#3f8fca"/><rect x="905" y="79" width="38" height="38" fill="#0696d7"/><rect x="908.500" y="82.500" width="27" height="21" fill="none" stroke="#9fe37a" stroke-width="0.900" stroke-dasharray="3.500 2"/><path d="M929 96.500 v15.500 l3.500 -3.500 l2.500 5.500 l2.500 -1.200 l-2.500 -5.300 h5z" fill="#fff"/></svg></div><div id="browser"><div id="brhead"></div><span class="t" style="left:29.0px;top:148.5px;font-size:11px;color:#555;font-weight:400;transform:scaleX(0.7500);">ブラウザ</span><div id="sbtrack"></div><div id="sbthumb"></div><div class="b" style="left:40px;top:174px;width:168px;height:19.5px;background:#f3f3f3;"></div><div class="b" style="left:65px;top:176.5px;width:118px;height:15.5px;background:#8f8f8f;"></div><div class="b" style="left:58px;top:198px;width:118px;height:19.5px;background:#f3f3f3;"></div><div class="b" style="left:58px;top:222px;width:126px;height:19.5px;background:#f3f3f3;"></div><div class="b" style="left:58px;top:246px;width:91px;height:19.5px;background:#f3f3f3;"></div><div class="b" style="left:58px;top:270px;width:94.5px;height:19.5px;background:#f3f3f3;"></div><div class="b" style="left:76px;top:294px;width:130.5px;height:19.5px;background:#f3f3f3;"></div><div class="b" style="left:94px;top:318px;width:134.5px;height:19.5px;background:#f3f3f3;"></div><div class="b" style="left:94px;top:342px;width:144.5px;height:19.5px;background:#f3f3f3;"></div><div class="b" style="left:94px;top:366px;width:143.5px;height:19.5px;background:#f3f3f3;"></div><div class="b" style="left:94px;top:390px;width:152.0px;height:19.5px;background:#f3f3f3;"></div><div class="b" style="left:94px;top:414px;width:134.5px;height:19.5px;background:#f3f3f3;"></div><div class="b" style="left:94px;top:438px;width:139.5px;height:19.5px;background:#f3f3f3;"></div><div class="b" style="left:94px;top:462px;width:107.5px;height:19.5px;background:#f3f3f3;"></div><div class="b" style="left:94px;top:486px;width:118.0px;height:19.5px;background:#f3f3f3;"></div><div class="b" style="left:94px;top:510px;width:118.0px;height:19.5px;background:#f3f3f3;"></div><div class="b" style="left:94px;top:534px;width:107.5px;height:19.5px;background:#f3f3f3;"></div><div class="b" style="left:94px;top:558px;width:107.5px;height:19.5px;background:#f3f3f3;"></div><div class="b" style="left:94px;top:582px;width:107.5px;height:19.5px;background:#f3f3f3;"></div><div class="b" style="left:94px;top:606px;width:107.5px;height:19.5px;background:#f3f3f3;"></div><div class="b" style="left:94px;top:630px;width:136.5px;height:19.5px;background:#f3f3f3;"></div><div class="b" style="left:58px;top:654px;width:111px;height:19.5px;background:#f3f3f3;"></div><div class="b" style="left:58px;top:678px;width:98px;height:19.5px;background:#f3f3f3;"></div><div class="b" style="left:58px;top:702px;width:98px;height:19.5px;background:#f3f3f3;"></div><div class="b" style="left:58px;top:726px;width:98px;height:19.5px;background:#f3f3f3;"></div><div class="b" style="left:58px;top:750px;width:98px;height:19.5px;background:#f3f3f3;"></div><div class="b" style="left:58px;top:774px;width:98px;height:19.5px;background:#f3f3f3;"></div><div class="b" style="left:58px;top:798px;width:98px;height:19.5px;background:#f3f3f3;"></div><div class="b" style="left:58px;top:822px;width:98px;height:19.5px;background:#f3f3f3;"></div><div class="b" style="left:58px;top:846px;width:98px;height:19.5px;background:#f3f3f3;"></div><div class="b" style="left:58px;top:870px;width:98px;height:19.5px;background:#f3f3f3;"></div><div class="b" style="left:58px;top:894px;width:98px;height:19.5px;background:#f3f3f3;"></div><div class="b" style="left:58px;top:918px;width:98px;height:19.5px;background:#f3f3f3;"></div><div class="b" style="left:58px;top:942px;width:98px;height:19.5px;background:#f3f3f3;"></div><div class="b" style="left:58px;top:966px;width:98px;height:19.5px;background:#f3f3f3;"></div><div id="comments"></div><svg class="abs" style="left:0;top:140px" width="310" height="900" viewBox="0 140 310 900"><defs><linearGradient id="trig" x1="0" y1="0" x2="1" y2="1"><stop offset="0.3" stop-color="#d8d8d8"/><stop offset="1" stop-color="#5a5a5a"/></linearGradient><linearGradient id="bodyg" x1="0" y1="0" x2="1" y2="0"><stop offset="0" stop-color="#fff"/><stop offset="0.450" stop-color="#f4f5f7"/><stop offset="1" stop-color="#c6cad3"/></linearGradient></defs><path d="M9 156 l4.500 -3.200 v6.400z M14.500 156 l4.500 -3.200 v6.400z" fill="#222"/><circle cx="287" cy="156" r="4.600" fill="#1a1a1a"/><path d="M284.500 156 h5" stroke="#fff" stroke-width="1.300"/><path d="M31.5 178.5 V189 H21.5Z" fill="url(#trig)" stroke="#3a3a3a" stroke-width="1"/><path d="M42.7 184 q8.300 -9.600 16.600 0 q-8.300 9.600 -16.600 0z" fill="#9b9b9b"/><circle cx="51" cy="184" r="3.400" fill="#ececec"/><circle cx="51" cy="184" r="1.900" fill="#9b9b9b"/><path d="M68.5 179.5 l3.500 -3 h11.500 v11.500 l-3.500 3.500 h-11.500z" fill="#fff" stroke="#555" stroke-width="0.900"/><path d="M68.5 179.5 h11.500 v12 M80.0 179.5 l3.500 -3" fill="none" stroke="#888" stroke-width="0.700"/><path d="M80.0 179.5 l3.500 -3 v11.500 l-3.500 3.500z" fill="#d8d8d8"/><circle cx="193.500" cy="184" r="5.800" fill="#fff" stroke="#333" stroke-width="1.100"/><circle cx="193.500" cy="184" r="2.300" fill="#333"/><path d="M40.2 201.7 L48.8 208 L40.2 214.3Z" fill="#fff" stroke="#2e2e2e" stroke-width="1.300" stroke-linejoin="round"/><path d="M70.00 208.00 L73.30 208.00" stroke="#7a7a7a" stroke-width="2.600"/><path d="M69.12 210.12 L71.45 212.45" stroke="#7a7a7a" stroke-width="2.600"/><path d="M67.00 211.00 L67.00 214.30" stroke="#7a7a7a" stroke-width="2.600"/><path d="M64.88 210.12 L62.55 212.45" stroke="#7a7a7a" stroke-width="2.600"/><path d="M64.00 208.00 L60.70 208.00" stroke="#7a7a7a" stroke-width="2.600"/><path d="M64.88 205.88 L62.55 203.55" stroke="#7a7a7a" stroke-width="2.600"/><path d="M67.00 205.00 L67.00 201.70" stroke="#7a7a7a" stroke-width="2.600"/><path d="M69.12 205.88 L71.45 203.55" stroke="#7a7a7a" stroke-width="2.600"/><circle cx="67" cy="208" r="3.600" fill="none" stroke="#7a7a7a" stroke-width="2.200"/><path d="M40.2 225.7 L48.8 232 L40.2 238.3Z" fill="#fff" stroke="#2e2e2e" stroke-width="1.300" stroke-linejoin="round"/><path d="M61 226 h6.500 v1.500 h-6.500z M61 228.5 h16 v9.500 h-16z" fill="#9c9c9c"/><path d="M40.2 249.7 L48.8 256 L40.2 262.3Z" fill="#fff" stroke="#2e2e2e" stroke-width="1.300" stroke-linejoin="round"/><path d="M61 256 q8 -8.500 16 0 q-8 8.500 -16 0z" fill="none" stroke="#b5b5b5" stroke-width="1.100"/><circle cx="69" cy="256" r="3" fill="none" stroke="#b5b5b5" stroke-width="1.100"/><path d="M63 250.5 L75.5 261.5" stroke="#a0a0a0" stroke-width="1.100"/><path d="M86 250 h6.500 v1.500 h-6.500z M86 252.5 h16 v9.500 h-16z" fill="#9c9c9c"/><path d="M48.5 274.5 V285 H38.5Z" fill="url(#trig)" stroke="#3a3a3a" stroke-width="1"/><path d="M60.7 280 q8.300 -9.600 16.600 0 q-8.300 9.600 -16.600 0z" fill="#9b9b9b"/><circle cx="69" cy="280" r="3.400" fill="#ececec"/><circle cx="69" cy="280" r="1.900" fill="#9b9b9b"/><path d="M86 274 h6.500 v1.500 h-6.500z M86 276.5 h16 v9.500 h-16z" fill="#9c9c9c"/><path d="M66.5 298.5 V309 H56.5Z" fill="url(#trig)" stroke="#3a3a3a" stroke-width="1"/><path d="M78.7 304 q8.300 -9.600 16.600 0 q-8.300 9.600 -16.600 0z" fill="#9b9b9b"/><circle cx="87" cy="304" r="3.400" fill="#ececec"/><circle cx="87" cy="304" r="1.900" fill="#9b9b9b"/><path d="M104 298 h6.500 v1.500 h-6.500z M104 300.5 h16 v9.500 h-16z" fill="#9c9c9c"/><path d="M96.7 328 q8.300 -9.600 16.600 0 q-8.300 9.600 -16.600 0z" fill="#9b9b9b"/><circle cx="105" cy="328" r="3.400" fill="#ececec"/><circle cx="105" cy="328" r="1.900" fill="#9b9b9b"/><rect x="122.5" y="319.5" width="15" height="17" rx="3.500" fill="url(#bodyg)" stroke="#46536b" stroke-width="1"/><path d="M123.3 323.5 q6.700 3 13.400 0" fill="none" stroke="#8791a3" stroke-width="0.600"/><path d="M96.7 352 q8.300 -9.600 16.600 0 q-8.300 9.600 -16.600 0z" fill="#9b9b9b"/><circle cx="105" cy="352" r="3.400" fill="#ececec"/><circle cx="105" cy="352" r="1.900" fill="#9b9b9b"/><rect x="122.5" y="343.5" width="15" height="17" rx="3.500" fill="url(#bodyg)" stroke="#46536b" stroke-width="1"/><path d="M123.3 347.5 q6.700 3 13.400 0" fill="none" stroke="#8791a3" stroke-width="0.600"/><path d="M96.7 376 q8.300 -9.600 16.600 0 q-8.300 9.600 -16.600 0z" fill="#9b9b9b"/><circle cx="105" cy="376" r="3.400" fill="#ececec"/><circle cx="105" cy="376" r="1.900" fill="#9b9b9b"/><rect x="122.5" y="367.5" width="15" height="17" rx="3.500" fill="url(#bodyg)" stroke="#46536b" stroke-width="1"/><path d="M123.3 371.5 q6.700 3 13.400 0" fill="none" stroke="#8791a3" stroke-width="0.600"/><path d="M96.7 400 q8.300 -9.600 16.600 0 q-8.300 9.600 -16.600 0z" fill="#9b9b9b"/><circle cx="105" cy="400" r="3.400" fill="#ececec"/><circle cx="105" cy="400" r="1.900" fill="#9b9b9b"/><rect x="122.5" y="391.5" width="15" height="17" rx="3.500" fill="url(#bodyg)" stroke="#46536b" stroke-width="1"/><path d="M123.3 395.5 q6.700 3 13.400 0" fill="none" stroke="#8791a3" stroke-width="0.600"/><path d="M96.7 424 q8.300 -9.600 16.600 0 q-8.300 9.600 -16.600 0z" fill="#9b9b9b"/><circle cx="105" cy="424" r="3.400" fill="#ececec"/><circle cx="105" cy="424" r="1.900" fill="#9b9b9b"/><rect x="122.5" y="415.5" width="15" height="17" rx="3.500" fill="url(#bodyg)" stroke="#46536b" stroke-width="1"/><path d="M123.3 419.5 q6.700 3 13.400 0" fill="none" stroke="#8791a3" stroke-width="0.600"/><path d="M96.7 448 q8.300 -9.600 16.600 0 q-8.300 9.600 -16.600 0z" fill="#9b9b9b"/><circle cx="105" cy="448" r="3.400" fill="#ececec"/><circle cx="105" cy="448" r="1.900" fill="#9b9b9b"/><rect x="122.5" y="439.5" width="15" height="17" rx="3.500" fill="url(#bodyg)" stroke="#46536b" stroke-width="1"/><path d="M123.3 443.5 q6.700 3 13.400 0" fill="none" stroke="#8791a3" stroke-width="0.600"/><path d="M96.7 472 q8.300 -9.600 16.600 0 q-8.300 9.600 -16.600 0z" fill="#9b9b9b"/><circle cx="105" cy="472" r="3.400" fill="#ececec"/><circle cx="105" cy="472" r="1.900" fill="#9b9b9b"/><rect x="122.5" y="463.5" width="15" height="17" rx="3.500" fill="url(#bodyg)" stroke="#46536b" stroke-width="1"/><path d="M123.3 467.5 q6.700 3 13.400 0" fill="none" stroke="#8791a3" stroke-width="0.600"/><path d="M96.7 496 q8.300 -9.600 16.600 0 q-8.300 9.600 -16.600 0z" fill="#9b9b9b"/><circle cx="105" cy="496" r="3.400" fill="#ececec"/><circle cx="105" cy="496" r="1.900" fill="#9b9b9b"/><rect x="122.5" y="487.5" width="15" height="17" rx="3.500" fill="url(#bodyg)" stroke="#46536b" stroke-width="1"/><path d="M123.3 491.5 q6.700 3 13.400 0" fill="none" stroke="#8791a3" stroke-width="0.600"/><path d="M96.7 520 q8.300 -9.600 16.600 0 q-8.300 9.600 -16.600 0z" fill="#9b9b9b"/><circle cx="105" cy="520" r="3.400" fill="#ececec"/><circle cx="105" cy="520" r="1.900" fill="#9b9b9b"/><rect x="122.5" y="511.5" width="15" height="17" rx="3.500" fill="url(#bodyg)" stroke="#46536b" stroke-width="1"/><path d="M123.3 515.5 q6.700 3 13.400 0" fill="none" stroke="#8791a3" stroke-width="0.600"/><path d="M96.7 544 q8.300 -9.600 16.600 0 q-8.300 9.600 -16.600 0z" fill="#9b9b9b"/><circle cx="105" cy="544" r="3.400" fill="#ececec"/><circle cx="105" cy="544" r="1.900" fill="#9b9b9b"/><rect x="122.5" y="535.5" width="15" height="17" rx="3.500" fill="url(#bodyg)" stroke="#46536b" stroke-width="1"/><path d="M123.3 539.5 q6.700 3 13.400 0" fill="none" stroke="#8791a3" stroke-width="0.600"/><path d="M96.7 568 q8.300 -9.600 16.600 0 q-8.300 9.600 -16.600 0z" fill="#9b9b9b"/><circle cx="105" cy="568" r="3.400" fill="#ececec"/><circle cx="105" cy="568" r="1.900" fill="#9b9b9b"/><rect x="122.5" y="559.5" width="15" height="17" rx="3.500" fill="url(#bodyg)" stroke="#46536b" stroke-width="1"/><path d="M123.3 563.5 q6.700 3 13.400 0" fill="none" stroke="#8791a3" stroke-width="0.600"/><path d="M96.7 592 q8.300 -9.600 16.600 0 q-8.300 9.600 -16.600 0z" fill="#9b9b9b"/><circle cx="105" cy="592" r="3.400" fill="#ececec"/><circle cx="105" cy="592" r="1.900" fill="#9b9b9b"/><rect x="122.5" y="583.5" width="15" height="17" rx="3.500" fill="url(#bodyg)" stroke="#46536b" stroke-width="1"/><path d="M123.3 587.5 q6.700 3 13.400 0" fill="none" stroke="#8791a3" stroke-width="0.600"/><path d="M96.7 616 q8.300 -9.600 16.600 0 q-8.300 9.600 -16.600 0z" fill="#9b9b9b"/><circle cx="105" cy="616" r="3.400" fill="#ececec"/><circle cx="105" cy="616" r="1.900" fill="#9b9b9b"/><rect x="122.5" y="607.5" width="15" height="17" rx="3.500" fill="url(#bodyg)" stroke="#46536b" stroke-width="1"/><path d="M123.3 611.5 q6.700 3 13.400 0" fill="none" stroke="#8791a3" stroke-width="0.600"/><path d="M96.7 640 q8.300 -9.600 16.600 0 q-8.300 9.600 -16.600 0z" fill="#9b9b9b"/><circle cx="105" cy="640" r="3.400" fill="#ececec"/><circle cx="105" cy="640" r="1.900" fill="#9b9b9b"/><rect x="122.5" y="631.5" width="15" height="17" rx="3.500" fill="url(#bodyg)" stroke="#46536b" stroke-width="1"/><path d="M123.3 635.5 q6.700 3 13.400 0" fill="none" stroke="#8791a3" stroke-width="0.600"/><path d="M40.2 657.7 L48.8 664 L40.2 670.3Z" fill="#fff" stroke="#2e2e2e" stroke-width="1.300" stroke-linejoin="round"/><path d="M60.7 664 q8.300 -9.600 16.600 0 q-8.300 9.600 -16.600 0z" fill="#9b9b9b"/><circle cx="69" cy="664" r="3.400" fill="#ececec"/><circle cx="69" cy="664" r="1.900" fill="#9b9b9b"/><path d="M86 658 h6.500 v1.500 h-6.500z M86 660.5 h16 v9.500 h-16z" fill="#9c9c9c"/><path d="M60 693.5 l2.500 -1.500 h10 l-2.500 1.500z M60 693.5 v2 h10 v-2z" fill="#bdbdbd"/><path d="M60.5 683.0 l3 -2.500 h9.500 l-3 2.500z" fill="#8cc8f5"/><path d="M60.5 683.0 h9.500 v10.500 h-9.500z" fill="#5aa7e0"/><path d="M70 683.0 l3 -2.500 v10.500 l-3 2.500z" fill="#3f8aca"/><path d="M75 693.0 v-11" stroke="#333" stroke-width="0.900"/><path d="M73.6 683.5 l1.400 -3 l1.400 3z" fill="#333"/><path d="M60 717.5 l2.500 -1.500 h10 l-2.500 1.500z M60 717.5 v2 h10 v-2z" fill="#bdbdbd"/><path d="M60.5 707.0 l3 -2.500 h9.500 l-3 2.500z" fill="#8cc8f5"/><path d="M60.5 707.0 h9.500 v10.500 h-9.500z" fill="#5aa7e0"/><path d="M70 707.0 l3 -2.500 v10.500 l-3 2.500z" fill="#3f8aca"/><path d="M75 717.0 v-11" stroke="#333" stroke-width="0.900"/><path d="M73.6 707.5 l1.400 -3 l1.400 3z" fill="#333"/><path d="M60 741.5 l2.500 -1.500 h10 l-2.500 1.500z M60 741.5 v2 h10 v-2z" fill="#bdbdbd"/><path d="M60.5 731.0 l3 -2.500 h9.500 l-3 2.500z" fill="#8cc8f5"/><path d="M60.5 731.0 h9.500 v10.500 h-9.500z" fill="#5aa7e0"/><path d="M70 731.0 l3 -2.500 v10.500 l-3 2.500z" fill="#3f8aca"/><path d="M75 741.0 v-11" stroke="#333" stroke-width="0.900"/><path d="M73.6 731.5 l1.400 -3 l1.400 3z" fill="#333"/><path d="M60 765.5 l2.500 -1.500 h10 l-2.500 1.500z M60 765.5 v2 h10 v-2z" fill="#bdbdbd"/><path d="M60.5 755.0 l3 -2.500 h9.500 l-3 2.500z" fill="#8cc8f5"/><path d="M60.5 755.0 h9.500 v10.500 h-9.500z" fill="#5aa7e0"/><path d="M70 755.0 l3 -2.500 v10.500 l-3 2.500z" fill="#3f8aca"/><path d="M75 765.0 v-11" stroke="#333" stroke-width="0.900"/><path d="M73.6 755.5 l1.400 -3 l1.400 3z" fill="#333"/><path d="M60 789.5 l2.500 -1.500 h10 l-2.500 1.500z M60 789.5 v2 h10 v-2z" fill="#bdbdbd"/><path d="M60.5 779.0 l3 -2.500 h9.500 l-3 2.500z" fill="#8cc8f5"/><path d="M60.5 779.0 h9.500 v10.500 h-9.500z" fill="#5aa7e0"/><path d="M70 779.0 l3 -2.500 v10.500 l-3 2.500z" fill="#3f8aca"/><path d="M75 789.0 v-11" stroke="#333" stroke-width="0.900"/><path d="M73.6 779.5 l1.400 -3 l1.400 3z" fill="#333"/><path d="M60 813.5 l2.500 -1.500 h10 l-2.500 1.500z M60 813.5 v2 h10 v-2z" fill="#bdbdbd"/><path d="M60.5 803.0 l3 -2.500 h9.500 l-3 2.500z" fill="#8cc8f5"/><path d="M60.5 803.0 h9.500 v10.500 h-9.500z" fill="#5aa7e0"/><path d="M70 803.0 l3 -2.500 v10.500 l-3 2.500z" fill="#3f8aca"/><path d="M75 813.0 v-11" stroke="#333" stroke-width="0.900"/><path d="M73.6 803.5 l1.400 -3 l1.400 3z" fill="#333"/><path d="M60.5 827 l2.500 -2.500 h4 q8.500 0.500 8.500 9 v3.500 l-2.500 2.500 h-12.500z" fill="#dcdcdc" stroke="#666" stroke-width="0.800"/><path d="M67.0 824.5 q8.500 0.500 8.500 9 l-2.500 2 q-0.500 -7 -7.500 -8.800z" fill="#5aa7e0"/><path d="M60 861.5 l2.500 -1.500 h10 l-2.500 1.500z M60 861.5 v2 h10 v-2z" fill="#bdbdbd"/><path d="M60.5 851.0 l3 -2.500 h9.500 l-3 2.500z" fill="#8cc8f5"/><path d="M60.5 851.0 h9.500 v10.500 h-9.500z" fill="#5aa7e0"/><path d="M70 851.0 l3 -2.500 v10.500 l-3 2.500z" fill="#3f8aca"/><path d="M75 861.0 v-11" stroke="#333" stroke-width="0.900"/><path d="M73.6 851.5 l1.400 -3 l1.400 3z" fill="#333"/><path d="M60 885.5 l2.500 -1.500 h10 l-2.500 1.500z M60 885.5 v2 h10 v-2z" fill="#bdbdbd"/><path d="M60.5 875.0 l3 -2.500 h9.500 l-3 2.500z" fill="#8cc8f5"/><path d="M60.5 875.0 h9.500 v10.500 h-9.500z" fill="#5aa7e0"/><path d="M70 875.0 l3 -2.500 v10.500 l-3 2.500z" fill="#3f8aca"/><path d="M75 885.0 v-11" stroke="#333" stroke-width="0.900"/><path d="M73.6 875.5 l1.400 -3 l1.400 3z" fill="#333"/><path d="M60 909.5 l2.500 -1.500 h10 l-2.500 1.500z M60 909.5 v2 h10 v-2z" fill="#bdbdbd"/><path d="M60.5 899.0 l3 -2.500 h9.500 l-3 2.500z" fill="#8cc8f5"/><path d="M60.5 899.0 h9.500 v10.500 h-9.500z" fill="#5aa7e0"/><path d="M70 899.0 l3 -2.500 v10.500 l-3 2.500z" fill="#3f8aca"/><path d="M75 909.0 v-11" stroke="#333" stroke-width="0.900"/><path d="M73.6 899.5 l1.400 -3 l1.400 3z" fill="#333"/><path d="M60 933.5 l2.500 -1.500 h10 l-2.500 1.500z M60 933.5 v2 h10 v-2z" fill="#bdbdbd"/><path d="M60.5 923.0 l3 -2.500 h9.500 l-3 2.500z" fill="#8cc8f5"/><path d="M60.5 923.0 h9.500 v10.500 h-9.500z" fill="#5aa7e0"/><path d="M70 923.0 l3 -2.500 v10.500 l-3 2.500z" fill="#3f8aca"/><path d="M75 933.0 v-11" stroke="#333" stroke-width="0.900"/><path d="M73.6 923.5 l1.400 -3 l1.400 3z" fill="#333"/><path d="M60 957.5 l2.500 -1.500 h10 l-2.500 1.500z M60 957.5 v2 h10 v-2z" fill="#bdbdbd"/><path d="M60.5 947.0 l3 -2.500 h9.500 l-3 2.500z" fill="#8cc8f5"/><path d="M60.5 947.0 h9.500 v10.500 h-9.500z" fill="#5aa7e0"/><path d="M70 947.0 l3 -2.500 v10.500 l-3 2.500z" fill="#3f8aca"/><path d="M75 957.0 v-11" stroke="#333" stroke-width="0.900"/><path d="M73.6 947.5 l1.400 -3 l1.400 3z" fill="#333"/><path d="M60 981.5 l2.500 -1.500 h10 l-2.500 1.500z M60 981.5 v2 h10 v-2z" fill="#bdbdbd"/><path d="M60.5 971.0 l3 -2.500 h9.500 l-3 2.500z" fill="#8cc8f5"/><path d="M60.5 971.0 h9.500 v10.500 h-9.500z" fill="#5aa7e0"/><path d="M70 971.0 l3 -2.500 v10.500 l-3 2.500z" fill="#3f8aca"/><path d="M75 981.0 v-11" stroke="#333" stroke-width="0.900"/><path d="M73.6 971.5 l1.400 -3 l1.400 3z" fill="#333"/><circle cx="287" cy="1023" r="4.600" fill="#1a1a1a"/><path d="M284.500 1023 h5 M287 1020.500 v5" stroke="#fff" stroke-width="1.200"/></svg><span class="t" style="left:98.5px;top:175.8px;font-size:11px;color:#fff;font-weight:700;transform:scaleX(0.9932);">MT32_1_25 v5</span><span class="t" style="left:86.0px;top:200.5px;font-size:11px;color:#3a3a3a;font-weight:400;transform:scaleX(0.7929);">ドキュメントの設定</span><span class="t" style="left:91.5px;top:224.5px;font-size:11px;color:#3a3a3a;font-weight:400;transform:scaleX(0.8232);">名前の付いたビュー</span><span class="t" style="left:116.0px;top:248.5px;font-size:11px;color:#3a3a3a;font-weight:400;transform:scaleX(0.9773);">原点</span><span class="t" style="left:116.0px;top:272.5px;font-size:11px;color:#3a3a3a;font-weight:400;transform:scaleX(0.7756);">ボディ</span><span class="t" style="left:134.5px;top:296.5px;font-size:11px;color:#3a3a3a;font-weight:400;transform:scaleX(0.8532);">グループ1 (14)</span><span class="t" style="left:152.5px;top:320.5px;font-size:11px;color:#3a3a3a;font-weight:400;transform:scaleX(0.9161);">透明パネル (1)</span><span class="t" style="left:152.5px;top:344.5px;font-size:11px;color:#3a3a3a;font-weight:400;transform:scaleX(0.8075);">フロントパネル (1)</span><span class="t" style="left:152.5px;top:368.5px;font-size:11px;color:#3a3a3a;font-weight:400;transform:scaleX(0.7968);">スイッチパネル (1)</span><span class="t" style="left:152.5px;top:392.5px;font-size:11px;color:#3a3a3a;font-weight:400;transform:scaleX(0.7968);">ボリュームつまみ (1)</span><span class="t" style="left:152.5px;top:416.5px;font-size:11px;color:#3a3a3a;font-weight:400;transform:scaleX(0.9161);">液晶パネル (1)</span><span class="t" style="left:152.5px;top:440.5px;font-size:11px;color:#3a3a3a;font-weight:400;transform:scaleX(0.8580);">内部フレーム (1)</span><span class="t" style="left:152.5px;top:464.5px;font-size:11px;color:#3a3a3a;font-weight:400;transform:scaleX(1.0000);">右板 (1)</span><span class="t" style="left:152.5px;top:488.5px;font-size:11px;color:#3a3a3a;font-weight:400;transform:scaleX(0.9899);">内部左 (1)</span><span class="t" style="left:152.5px;top:512.5px;font-size:11px;color:#3a3a3a;font-weight:400;transform:scaleX(0.9899);">内部右 (1)</span><span class="t" style="left:152.5px;top:536.5px;font-size:11px;color:#3a3a3a;font-weight:400;transform:scaleX(1.0000);">天板 (1)</span><span class="t" style="left:152.5px;top:560.5px;font-size:11px;color:#3a3a3a;font-weight:400;transform:scaleX(1.0000);">左板 (1)</span><span class="t" style="left:152.5px;top:584.5px;font-size:11px;color:#3a3a3a;font-weight:400;transform:scaleX(1.0000);">底面 (1)</span><span class="t" style="left:152.5px;top:608.5px;font-size:11px;color:#3a3a3a;font-weight:400;transform:scaleX(1.0000);">背面 (1)</span><span class="t" style="left:152.5px;top:632.5px;font-size:11px;color:#3a3a3a;font-weight:400;transform:scaleX(0.9125);">MIDIGuyMount</span><span class="t" style="left:116.0px;top:656.5px;font-size:11px;color:#3a3a3a;font-weight:400;transform:scaleX(0.7545);">キャンバス</span><span class="t" style="left:91.5px;top:680.5px;font-size:11px;color:#3a3a3a;font-weight:400;transform:scaleX(0.8900);">押し出し137</span><span class="t" style="left:91.5px;top:704.5px;font-size:11px;color:#3a3a3a;font-weight:400;transform:scaleX(0.8900);">押し出し138</span><span class="t" style="left:91.5px;top:728.5px;font-size:11px;color:#3a3a3a;font-weight:400;transform:scaleX(0.8900);">押し出し139</span><span class="t" style="left:91.5px;top:752.5px;font-size:11px;color:#3a3a3a;font-weight:400;transform:scaleX(0.8900);">押し出し140</span><span class="t" style="left:91.5px;top:776.5px;font-size:11px;color:#3a3a3a;font-weight:400;transform:scaleX(0.8900);">押し出し141</span><span class="t" style="left:91.5px;top:800.5px;font-size:11px;color:#3a3a3a;font-weight:400;transform:scaleX(0.8900);">押し出し142</span><span class="t" style="left:91.5px;top:824.5px;font-size:11px;color:#3a3a3a;font-weight:400;transform:scaleX(0.7588);">フィレット143</span><span class="t" style="left:91.5px;top:848.5px;font-size:11px;color:#3a3a3a;font-weight:400;transform:scaleX(0.8900);">押し出し144</span><span class="t" style="left:91.5px;top:872.5px;font-size:11px;color:#3a3a3a;font-weight:400;transform:scaleX(0.8900);">押し出し145</span><span class="t" style="left:91.5px;top:896.5px;font-size:11px;color:#3a3a3a;font-weight:400;transform:scaleX(0.8900);">押し出し146</span><span class="t" style="left:91.5px;top:920.5px;font-size:11px;color:#3a3a3a;font-weight:400;transform:scaleX(0.8900);">押し出し147</span><span class="t" style="left:91.5px;top:944.5px;font-size:11px;color:#3a3a3a;font-weight:400;transform:scaleX(0.8900);">押し出し148</span><span class="t" style="left:91.5px;top:968.5px;font-size:11px;color:#3a3a3a;font-weight:400;transform:scaleX(0.8900);">押し出し149</span><span class="t" style="left:29.0px;top:1015.5px;font-size:11px;color:#555;font-weight:400;transform:scaleX(0.7273);">コメント</span></div></div><div id="rstrip"><div class="b" style="left:0;top:0;width:8px;height:34px;background:#ebebf3"></div><div class="b" style="left:0;top:34px;width:8px;height:37px;background:#fff"></div></div><div id="bottom"><div class="b" style="left:686px;top:0;width:48px;height:8px;background:#9b5219"></div><div class="b" style="left:882px;top:0;width:48px;height:8px;background:#333"></div></div></body></html>
